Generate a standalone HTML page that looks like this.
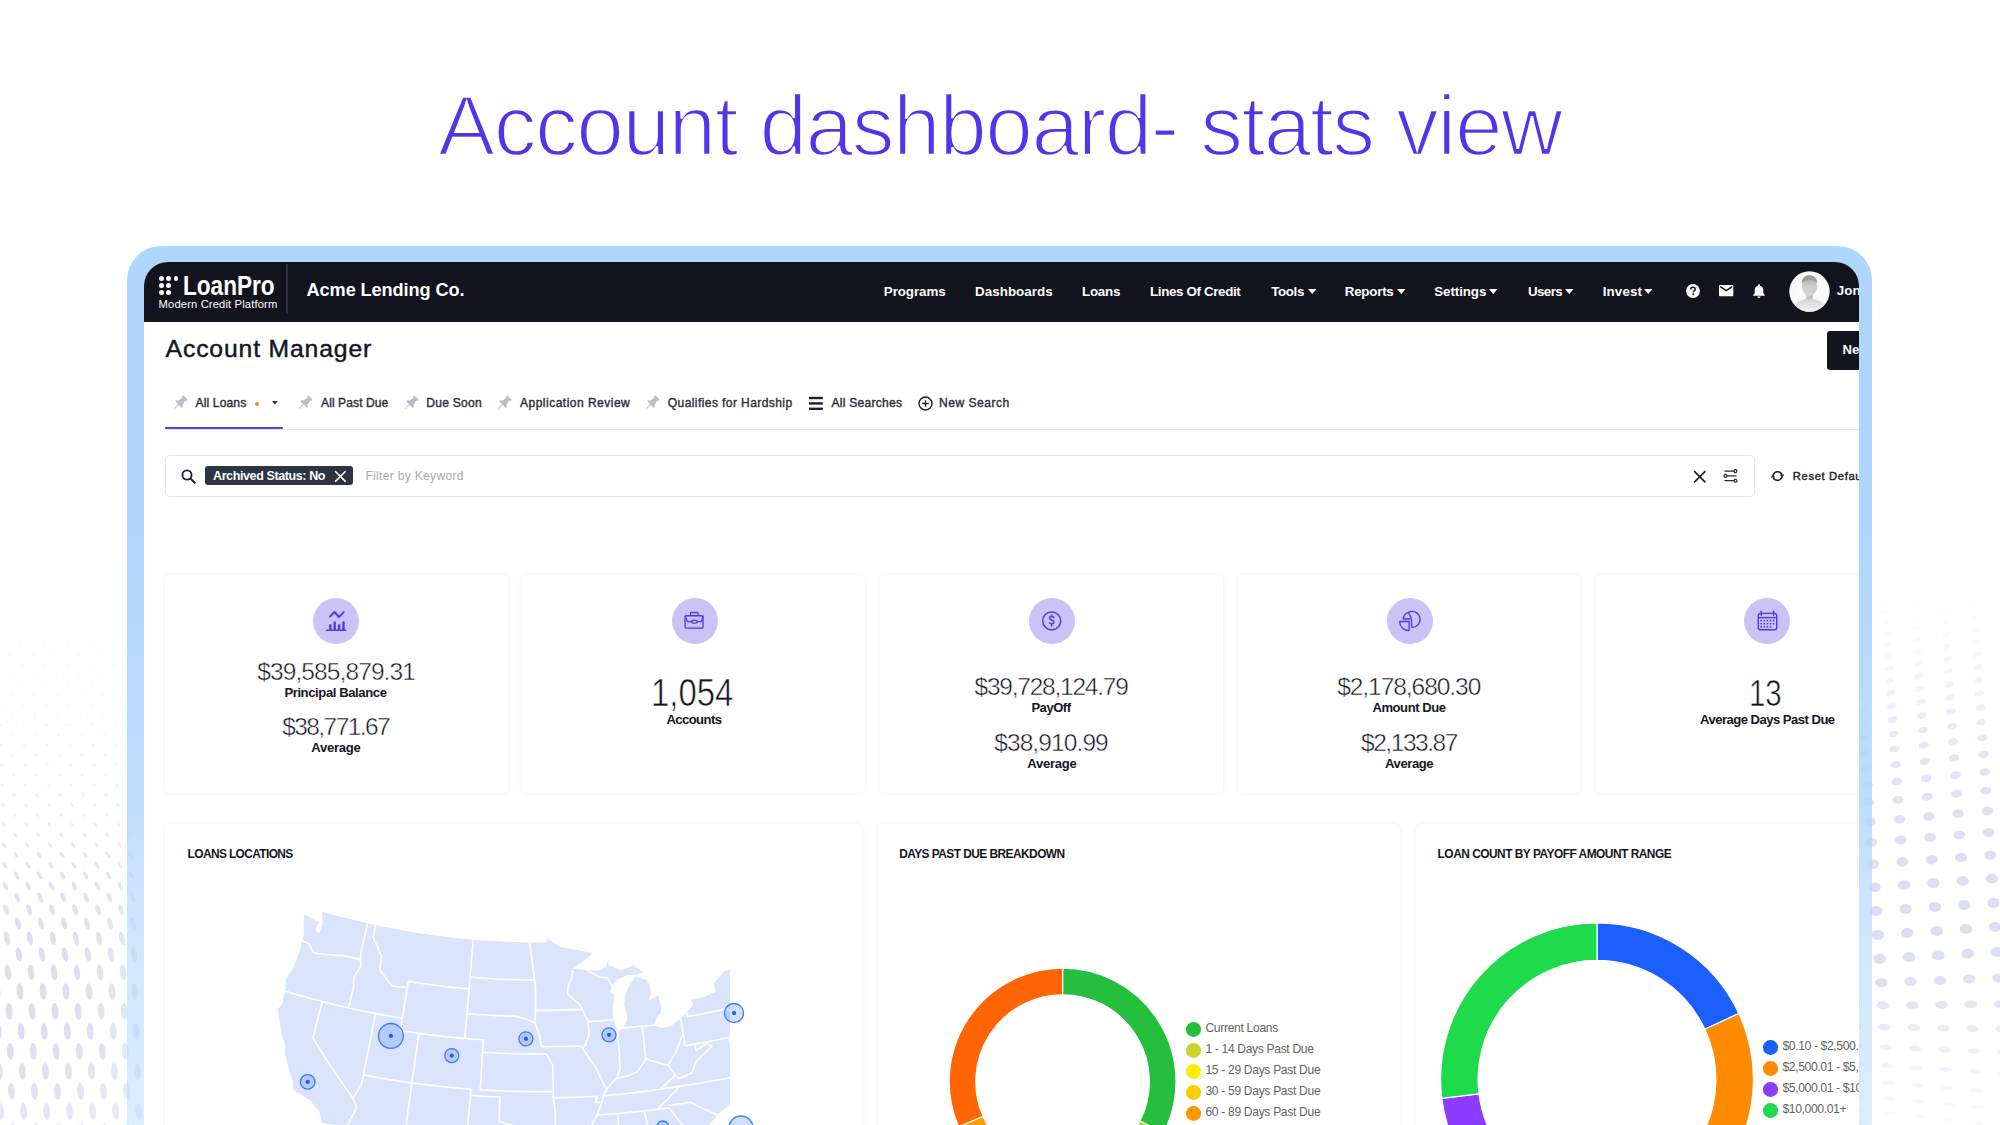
<!DOCTYPE html>
<html><head><meta charset="utf-8"><title>Account dashboard- stats view</title>
<style>
*{margin:0;padding:0;box-sizing:border-box}
html,body{width:2000px;height:1125px;overflow:hidden;background:#fff;font-family:"Liberation Sans",sans-serif}
.a{position:absolute;white-space:nowrap}
.card{position:absolute;background:#fff;border-radius:5px;box-shadow:0 0 6px rgba(30,30,60,.055),0 0 2px rgba(30,30,60,.04)}
.ic{position:absolute;width:46px;height:46px;border-radius:50%;background:#cbc2f6}
.dot{position:absolute;width:14px;height:14px;border-radius:50%}
.lg{position:absolute;font-size:12px;line-height:14px;color:#666;white-space:nowrap}
</style></head><body>

<svg class="a" style="left:0;top:0" width="2000" height="1125"><ellipse cx="-1.9" cy="645.0" rx="1.0" ry="1.8" transform="rotate(-42 -1.9 645.0)" fill="#d4d7ee" fill-opacity="0.18"/><ellipse cx="21.1" cy="645.0" rx="1.0" ry="1.8" transform="rotate(-42 21.1 645.0)" fill="#d4d7ee" fill-opacity="0.18"/><ellipse cx="44.1" cy="645.0" rx="1.0" ry="1.8" transform="rotate(-42 44.1 645.0)" fill="#d4d7ee" fill-opacity="0.18"/><ellipse cx="67.2" cy="645.0" rx="1.0" ry="1.8" transform="rotate(-42 67.2 645.0)" fill="#d4d7ee" fill-opacity="0.18"/><ellipse cx="90.2" cy="645.0" rx="1.0" ry="1.8" transform="rotate(-42 90.2 645.0)" fill="#d4d7ee" fill-opacity="0.16"/><ellipse cx="113.2" cy="645.0" rx="1.0" ry="1.8" transform="rotate(-42 113.2 645.0)" fill="#d4d7ee" fill-opacity="0.14"/><ellipse cx="136.2" cy="645.0" rx="1.0" ry="1.8" transform="rotate(-42 136.2 645.0)" fill="#d4d7ee" fill-opacity="0.13"/><ellipse cx="9.9" cy="655.0" rx="1.0" ry="1.8" transform="rotate(-42 9.9 655.0)" fill="#d4d7ee" fill-opacity="0.18"/><ellipse cx="33.0" cy="655.0" rx="1.0" ry="1.8" transform="rotate(-42 33.0 655.0)" fill="#d4d7ee" fill-opacity="0.18"/><ellipse cx="56.0" cy="655.0" rx="1.0" ry="1.8" transform="rotate(-42 56.0 655.0)" fill="#d4d7ee" fill-opacity="0.18"/><ellipse cx="79.0" cy="655.0" rx="1.0" ry="1.8" transform="rotate(-42 79.0 655.0)" fill="#d4d7ee" fill-opacity="0.17"/><ellipse cx="102.0" cy="655.0" rx="1.0" ry="1.8" transform="rotate(-42 102.0 655.0)" fill="#d4d7ee" fill-opacity="0.15"/><ellipse cx="125.0" cy="655.0" rx="1.0" ry="1.8" transform="rotate(-42 125.0 655.0)" fill="#d4d7ee" fill-opacity="0.14"/><ellipse cx="-1.2" cy="665.0" rx="1.0" ry="1.8" transform="rotate(-42 -1.2 665.0)" fill="#d4d7ee" fill-opacity="0.18"/><ellipse cx="21.8" cy="665.0" rx="1.0" ry="1.8" transform="rotate(-42 21.8 665.0)" fill="#d4d7ee" fill-opacity="0.18"/><ellipse cx="44.8" cy="665.0" rx="1.0" ry="1.8" transform="rotate(-42 44.8 665.0)" fill="#d4d7ee" fill-opacity="0.18"/><ellipse cx="67.8" cy="665.0" rx="1.0" ry="1.8" transform="rotate(-42 67.8 665.0)" fill="#d4d7ee" fill-opacity="0.18"/><ellipse cx="90.8" cy="665.0" rx="1.0" ry="1.8" transform="rotate(-42 90.8 665.0)" fill="#d4d7ee" fill-opacity="0.16"/><ellipse cx="113.8" cy="665.0" rx="1.0" ry="1.8" transform="rotate(-42 113.8 665.0)" fill="#d4d7ee" fill-opacity="0.14"/><ellipse cx="136.8" cy="665.0" rx="1.0" ry="1.8" transform="rotate(-42 136.8 665.0)" fill="#d4d7ee" fill-opacity="0.13"/><ellipse cx="10.6" cy="675.0" rx="1.0" ry="1.8" transform="rotate(-42 10.6 675.0)" fill="#d4d7ee" fill-opacity="0.18"/><ellipse cx="33.5" cy="675.0" rx="1.0" ry="1.8" transform="rotate(-42 33.5 675.0)" fill="#d4d7ee" fill-opacity="0.18"/><ellipse cx="56.5" cy="675.0" rx="1.0" ry="1.8" transform="rotate(-42 56.5 675.0)" fill="#d4d7ee" fill-opacity="0.18"/><ellipse cx="79.5" cy="675.0" rx="1.0" ry="1.8" transform="rotate(-42 79.5 675.0)" fill="#d4d7ee" fill-opacity="0.17"/><ellipse cx="102.5" cy="675.0" rx="1.0" ry="1.8" transform="rotate(-42 102.5 675.0)" fill="#d4d7ee" fill-opacity="0.16"/><ellipse cx="125.5" cy="675.0" rx="1.0" ry="1.8" transform="rotate(-42 125.5 675.0)" fill="#d4d7ee" fill-opacity="0.14"/><ellipse cx="-0.7" cy="685.0" rx="1.0" ry="1.8" transform="rotate(-42 -0.7 685.0)" fill="#d4d7ee" fill-opacity="0.19"/><ellipse cx="22.4" cy="685.0" rx="1.0" ry="1.8" transform="rotate(-42 22.4 685.0)" fill="#d4d7ee" fill-opacity="0.19"/><ellipse cx="45.4" cy="685.0" rx="1.0" ry="1.8" transform="rotate(-42 45.4 685.0)" fill="#d4d7ee" fill-opacity="0.19"/><ellipse cx="68.3" cy="685.0" rx="1.0" ry="1.8" transform="rotate(-42 68.3 685.0)" fill="#d4d7ee" fill-opacity="0.19"/><ellipse cx="91.3" cy="685.0" rx="1.0" ry="1.8" transform="rotate(-42 91.3 685.0)" fill="#d4d7ee" fill-opacity="0.17"/><ellipse cx="114.3" cy="685.0" rx="1.0" ry="1.8" transform="rotate(-42 114.3 685.0)" fill="#d4d7ee" fill-opacity="0.15"/><ellipse cx="137.3" cy="685.0" rx="1.0" ry="1.8" transform="rotate(-42 137.3 685.0)" fill="#d4d7ee" fill-opacity="0.14"/><ellipse cx="11.2" cy="695.0" rx="1.0" ry="1.8" transform="rotate(-42 11.2 695.0)" fill="#d4d7ee" fill-opacity="0.20"/><ellipse cx="34.1" cy="695.0" rx="1.0" ry="1.8" transform="rotate(-42 34.1 695.0)" fill="#d4d7ee" fill-opacity="0.20"/><ellipse cx="57.1" cy="695.0" rx="1.0" ry="1.8" transform="rotate(-42 57.1 695.0)" fill="#d4d7ee" fill-opacity="0.20"/><ellipse cx="80.2" cy="695.0" rx="1.0" ry="1.8" transform="rotate(-42 80.2 695.0)" fill="#d4d7ee" fill-opacity="0.19"/><ellipse cx="103.2" cy="695.0" rx="1.0" ry="1.8" transform="rotate(-42 103.2 695.0)" fill="#d4d7ee" fill-opacity="0.17"/><ellipse cx="126.2" cy="695.0" rx="1.0" ry="1.8" transform="rotate(-42 126.2 695.0)" fill="#d4d7ee" fill-opacity="0.15"/><ellipse cx="-0.1" cy="705.0" rx="1.0" ry="1.8" transform="rotate(-42 -0.1 705.0)" fill="#d4d7ee" fill-opacity="0.21"/><ellipse cx="22.9" cy="705.0" rx="1.0" ry="1.8" transform="rotate(-42 22.9 705.0)" fill="#d4d7ee" fill-opacity="0.21"/><ellipse cx="46.0" cy="705.0" rx="1.0" ry="1.8" transform="rotate(-42 46.0 705.0)" fill="#d4d7ee" fill-opacity="0.21"/><ellipse cx="69.0" cy="705.0" rx="1.0" ry="1.8" transform="rotate(-42 69.0 705.0)" fill="#d4d7ee" fill-opacity="0.21"/><ellipse cx="92.0" cy="705.0" rx="1.0" ry="1.8" transform="rotate(-42 92.0 705.0)" fill="#d4d7ee" fill-opacity="0.20"/><ellipse cx="115.0" cy="705.0" rx="1.0" ry="1.8" transform="rotate(-42 115.0 705.0)" fill="#d4d7ee" fill-opacity="0.17"/><ellipse cx="137.9" cy="705.0" rx="1.0" ry="1.8" transform="rotate(-42 137.9 705.0)" fill="#d4d7ee" fill-opacity="0.16"/><ellipse cx="11.8" cy="715.0" rx="1.0" ry="1.8" transform="rotate(-42 11.8 715.0)" fill="#d4d7ee" fill-opacity="0.23"/><ellipse cx="34.8" cy="715.0" rx="1.0" ry="1.8" transform="rotate(-42 34.8 715.0)" fill="#d4d7ee" fill-opacity="0.23"/><ellipse cx="57.8" cy="715.0" rx="1.0" ry="1.8" transform="rotate(-42 57.8 715.0)" fill="#d4d7ee" fill-opacity="0.23"/><ellipse cx="80.8" cy="715.0" rx="1.0" ry="1.8" transform="rotate(-42 80.8 715.0)" fill="#d4d7ee" fill-opacity="0.22"/><ellipse cx="103.8" cy="715.0" rx="1.0" ry="1.8" transform="rotate(-42 103.8 715.0)" fill="#d4d7ee" fill-opacity="0.20"/><ellipse cx="126.8" cy="715.0" rx="1.0" ry="1.8" transform="rotate(-42 126.8 715.0)" fill="#d4d7ee" fill-opacity="0.18"/><ellipse cx="0.5" cy="725.0" rx="1.0" ry="1.8" transform="rotate(-42 0.5 725.0)" fill="#d4d7ee" fill-opacity="0.25"/><ellipse cx="23.6" cy="725.0" rx="1.0" ry="1.8" transform="rotate(-42 23.6 725.0)" fill="#d4d7ee" fill-opacity="0.25"/><ellipse cx="46.5" cy="725.0" rx="1.0" ry="1.8" transform="rotate(-42 46.5 725.0)" fill="#d4d7ee" fill-opacity="0.25"/><ellipse cx="69.5" cy="725.0" rx="1.0" ry="1.8" transform="rotate(-42 69.5 725.0)" fill="#d4d7ee" fill-opacity="0.25"/><ellipse cx="92.5" cy="725.0" rx="1.0" ry="1.8" transform="rotate(-42 92.5 725.0)" fill="#d4d7ee" fill-opacity="0.23"/><ellipse cx="115.5" cy="725.0" rx="1.0" ry="1.8" transform="rotate(-42 115.5 725.0)" fill="#d4d7ee" fill-opacity="0.20"/><ellipse cx="138.6" cy="725.0" rx="1.0" ry="1.8" transform="rotate(-42 138.6 725.0)" fill="#d4d7ee" fill-opacity="0.19"/><ellipse cx="12.3" cy="735.0" rx="1.0" ry="1.8" transform="rotate(-42 12.3 735.0)" fill="#d4d7ee" fill-opacity="0.27"/><ellipse cx="35.4" cy="735.0" rx="1.0" ry="1.8" transform="rotate(-42 35.4 735.0)" fill="#d4d7ee" fill-opacity="0.27"/><ellipse cx="58.4" cy="735.0" rx="1.0" ry="1.8" transform="rotate(-42 58.4 735.0)" fill="#d4d7ee" fill-opacity="0.27"/><ellipse cx="81.3" cy="735.0" rx="1.0" ry="1.8" transform="rotate(-42 81.3 735.0)" fill="#d4d7ee" fill-opacity="0.26"/><ellipse cx="104.3" cy="735.0" rx="1.0" ry="1.8" transform="rotate(-42 104.3 735.0)" fill="#d4d7ee" fill-opacity="0.23"/><ellipse cx="127.3" cy="735.0" rx="1.0" ry="1.8" transform="rotate(-42 127.3 735.0)" fill="#d4d7ee" fill-opacity="0.21"/><ellipse cx="1.1" cy="745.0" rx="1.0" ry="1.8" transform="rotate(-42 1.1 745.0)" fill="#d4d7ee" fill-opacity="0.30"/><ellipse cx="24.1" cy="745.0" rx="1.0" ry="1.8" transform="rotate(-42 24.1 745.0)" fill="#d4d7ee" fill-opacity="0.30"/><ellipse cx="47.1" cy="745.0" rx="1.0" ry="1.8" transform="rotate(-42 47.1 745.0)" fill="#d4d7ee" fill-opacity="0.30"/><ellipse cx="70.2" cy="745.0" rx="1.0" ry="1.8" transform="rotate(-42 70.2 745.0)" fill="#d4d7ee" fill-opacity="0.29"/><ellipse cx="93.2" cy="745.0" rx="1.0" ry="1.8" transform="rotate(-42 93.2 745.0)" fill="#d4d7ee" fill-opacity="0.27"/><ellipse cx="116.2" cy="745.0" rx="1.0" ry="1.8" transform="rotate(-42 116.2 745.0)" fill="#d4d7ee" fill-opacity="0.24"/><ellipse cx="139.2" cy="745.0" rx="1.0" ry="1.8" transform="rotate(-42 139.2 745.0)" fill="#d4d7ee" fill-opacity="0.22"/><ellipse cx="12.9" cy="755.0" rx="1.0" ry="1.8" transform="rotate(-42 12.9 755.0)" fill="#d4d7ee" fill-opacity="0.32"/><ellipse cx="36.0" cy="755.0" rx="1.0" ry="1.8" transform="rotate(-42 36.0 755.0)" fill="#d4d7ee" fill-opacity="0.32"/><ellipse cx="59.0" cy="755.0" rx="1.0" ry="1.8" transform="rotate(-42 59.0 755.0)" fill="#d4d7ee" fill-opacity="0.32"/><ellipse cx="82.0" cy="755.0" rx="1.0" ry="1.8" transform="rotate(-42 82.0 755.0)" fill="#d4d7ee" fill-opacity="0.31"/><ellipse cx="105.0" cy="755.0" rx="1.0" ry="1.8" transform="rotate(-42 105.0 755.0)" fill="#d4d7ee" fill-opacity="0.28"/><ellipse cx="128.0" cy="755.0" rx="1.0" ry="1.8" transform="rotate(-42 128.0 755.0)" fill="#d4d7ee" fill-opacity="0.25"/><ellipse cx="1.8" cy="765.0" rx="1.0" ry="1.8" transform="rotate(-42 1.8 765.0)" fill="#d4d7ee" fill-opacity="0.35"/><ellipse cx="24.8" cy="765.0" rx="1.0" ry="1.8" transform="rotate(-42 24.8 765.0)" fill="#d4d7ee" fill-opacity="0.35"/><ellipse cx="47.8" cy="765.0" rx="1.0" ry="1.8" transform="rotate(-42 47.8 765.0)" fill="#d4d7ee" fill-opacity="0.35"/><ellipse cx="70.8" cy="765.0" rx="1.0" ry="1.8" transform="rotate(-42 70.8 765.0)" fill="#d4d7ee" fill-opacity="0.35"/><ellipse cx="93.8" cy="765.0" rx="1.0" ry="1.8" transform="rotate(-42 93.8 765.0)" fill="#d4d7ee" fill-opacity="0.32"/><ellipse cx="116.8" cy="765.0" rx="1.0" ry="1.8" transform="rotate(-42 116.8 765.0)" fill="#d4d7ee" fill-opacity="0.28"/><ellipse cx="139.8" cy="765.0" rx="1.0" ry="1.8" transform="rotate(-42 139.8 765.0)" fill="#d4d7ee" fill-opacity="0.26"/><ellipse cx="-9.4" cy="775.0" rx="1.0" ry="1.8" transform="rotate(-42 -9.4 775.0)" fill="#d4d7ee" fill-opacity="0.38"/><ellipse cx="13.6" cy="775.0" rx="1.0" ry="1.8" transform="rotate(-42 13.6 775.0)" fill="#d4d7ee" fill-opacity="0.38"/><ellipse cx="36.5" cy="775.0" rx="1.0" ry="1.8" transform="rotate(-42 36.5 775.0)" fill="#d4d7ee" fill-opacity="0.38"/><ellipse cx="59.5" cy="775.0" rx="1.0" ry="1.8" transform="rotate(-42 59.5 775.0)" fill="#d4d7ee" fill-opacity="0.38"/><ellipse cx="82.5" cy="775.0" rx="1.0" ry="1.8" transform="rotate(-42 82.5 775.0)" fill="#d4d7ee" fill-opacity="0.36"/><ellipse cx="105.5" cy="775.0" rx="1.0" ry="1.8" transform="rotate(-42 105.5 775.0)" fill="#d4d7ee" fill-opacity="0.32"/><ellipse cx="128.6" cy="775.0" rx="1.0" ry="1.8" transform="rotate(-42 128.6 775.0)" fill="#d4d7ee" fill-opacity="0.29"/><ellipse cx="2.3" cy="785.0" rx="1.0" ry="1.8" transform="rotate(-42 2.3 785.0)" fill="#d4d7ee" fill-opacity="0.41"/><ellipse cx="25.4" cy="785.0" rx="1.0" ry="1.8" transform="rotate(-42 25.4 785.0)" fill="#d4d7ee" fill-opacity="0.41"/><ellipse cx="48.4" cy="785.0" rx="1.0" ry="1.8" transform="rotate(-42 48.4 785.0)" fill="#d4d7ee" fill-opacity="0.41"/><ellipse cx="71.3" cy="785.0" rx="1.0" ry="1.8" transform="rotate(-42 71.3 785.0)" fill="#d4d7ee" fill-opacity="0.41"/><ellipse cx="94.3" cy="785.0" rx="1.0" ry="1.8" transform="rotate(-42 94.3 785.0)" fill="#d4d7ee" fill-opacity="0.37"/><ellipse cx="117.3" cy="785.0" rx="1.0" ry="1.8" transform="rotate(-42 117.3 785.0)" fill="#d4d7ee" fill-opacity="0.33"/><ellipse cx="-8.9" cy="795.0" rx="1.0" ry="1.9" transform="rotate(-42 -8.9 795.0)" fill="#d4d7ee" fill-opacity="0.44"/><ellipse cx="14.1" cy="795.0" rx="1.0" ry="1.9" transform="rotate(-42 14.1 795.0)" fill="#d4d7ee" fill-opacity="0.44"/><ellipse cx="37.1" cy="795.0" rx="1.0" ry="1.9" transform="rotate(-42 37.1 795.0)" fill="#d4d7ee" fill-opacity="0.44"/><ellipse cx="60.1" cy="795.0" rx="1.0" ry="1.9" transform="rotate(-42 60.1 795.0)" fill="#d4d7ee" fill-opacity="0.44"/><ellipse cx="83.2" cy="795.0" rx="1.0" ry="1.9" transform="rotate(-42 83.2 795.0)" fill="#d4d7ee" fill-opacity="0.42"/><ellipse cx="106.2" cy="795.0" rx="1.0" ry="1.9" transform="rotate(-42 106.2 795.0)" fill="#d4d7ee" fill-opacity="0.37"/><ellipse cx="129.2" cy="795.0" rx="1.0" ry="1.9" transform="rotate(-42 129.2 795.0)" fill="#d4d7ee" fill-opacity="0.34"/><ellipse cx="3.0" cy="805.0" rx="1.1" ry="2.0" transform="rotate(-41 3.0 805.0)" fill="#d4d7ee" fill-opacity="0.47"/><ellipse cx="25.9" cy="805.0" rx="1.1" ry="2.0" transform="rotate(-41 25.9 805.0)" fill="#d4d7ee" fill-opacity="0.47"/><ellipse cx="49.0" cy="805.0" rx="1.1" ry="2.0" transform="rotate(-41 49.0 805.0)" fill="#d4d7ee" fill-opacity="0.47"/><ellipse cx="72.0" cy="805.0" rx="1.1" ry="2.0" transform="rotate(-41 72.0 805.0)" fill="#d4d7ee" fill-opacity="0.47"/><ellipse cx="95.0" cy="805.0" rx="1.1" ry="2.0" transform="rotate(-41 95.0 805.0)" fill="#d4d7ee" fill-opacity="0.42"/><ellipse cx="118.0" cy="805.0" rx="1.1" ry="2.0" transform="rotate(-41 118.0 805.0)" fill="#d4d7ee" fill-opacity="0.38"/><ellipse cx="-8.2" cy="815.0" rx="1.1" ry="2.2" transform="rotate(-40 -8.2 815.0)" fill="#d4d7ee" fill-opacity="0.50"/><ellipse cx="14.8" cy="815.0" rx="1.1" ry="2.2" transform="rotate(-40 14.8 815.0)" fill="#d4d7ee" fill-opacity="0.50"/><ellipse cx="37.8" cy="815.0" rx="1.1" ry="2.2" transform="rotate(-40 37.8 815.0)" fill="#d4d7ee" fill-opacity="0.50"/><ellipse cx="60.8" cy="815.0" rx="1.1" ry="2.2" transform="rotate(-40 60.8 815.0)" fill="#d4d7ee" fill-opacity="0.50"/><ellipse cx="83.8" cy="815.0" rx="1.1" ry="2.2" transform="rotate(-40 83.8 815.0)" fill="#d4d7ee" fill-opacity="0.48"/><ellipse cx="106.8" cy="815.0" rx="1.1" ry="2.2" transform="rotate(-40 106.8 815.0)" fill="#d4d7ee" fill-opacity="0.42"/><ellipse cx="129.8" cy="815.0" rx="1.1" ry="2.2" transform="rotate(-40 129.8 815.0)" fill="#d4d7ee" fill-opacity="0.38"/><ellipse cx="3.5" cy="825.0" rx="1.2" ry="2.5" transform="rotate(-38 3.5 825.0)" fill="#d4d7ee" fill-opacity="0.53"/><ellipse cx="26.6" cy="825.0" rx="1.2" ry="2.5" transform="rotate(-38 26.6 825.0)" fill="#d4d7ee" fill-opacity="0.53"/><ellipse cx="49.5" cy="825.0" rx="1.2" ry="2.5" transform="rotate(-38 49.5 825.0)" fill="#d4d7ee" fill-opacity="0.53"/><ellipse cx="72.5" cy="825.0" rx="1.2" ry="2.5" transform="rotate(-38 72.5 825.0)" fill="#d4d7ee" fill-opacity="0.53"/><ellipse cx="95.5" cy="825.0" rx="1.2" ry="2.5" transform="rotate(-38 95.5 825.0)" fill="#d4d7ee" fill-opacity="0.48"/><ellipse cx="118.5" cy="825.0" rx="1.2" ry="2.5" transform="rotate(-38 118.5 825.0)" fill="#d4d7ee" fill-opacity="0.42"/><ellipse cx="-7.7" cy="835.0" rx="1.3" ry="2.8" transform="rotate(-37 -7.7 835.0)" fill="#d4d7ee" fill-opacity="0.57"/><ellipse cx="15.3" cy="835.0" rx="1.3" ry="2.8" transform="rotate(-37 15.3 835.0)" fill="#d4d7ee" fill-opacity="0.57"/><ellipse cx="38.4" cy="835.0" rx="1.3" ry="2.8" transform="rotate(-37 38.4 835.0)" fill="#d4d7ee" fill-opacity="0.57"/><ellipse cx="61.4" cy="835.0" rx="1.3" ry="2.8" transform="rotate(-37 61.4 835.0)" fill="#d4d7ee" fill-opacity="0.57"/><ellipse cx="84.3" cy="835.0" rx="1.3" ry="2.8" transform="rotate(-37 84.3 835.0)" fill="#d4d7ee" fill-opacity="0.53"/><ellipse cx="107.3" cy="835.0" rx="1.3" ry="2.8" transform="rotate(-37 107.3 835.0)" fill="#d4d7ee" fill-opacity="0.48"/><ellipse cx="130.3" cy="835.0" rx="1.3" ry="2.8" transform="rotate(-37 130.3 835.0)" fill="#d4d7ee" fill-opacity="0.43"/><ellipse cx="4.1" cy="845.0" rx="1.5" ry="3.1" transform="rotate(-35 4.1 845.0)" fill="#d4d7ee" fill-opacity="0.60"/><ellipse cx="27.1" cy="845.0" rx="1.5" ry="3.1" transform="rotate(-35 27.1 845.0)" fill="#d4d7ee" fill-opacity="0.60"/><ellipse cx="50.1" cy="845.0" rx="1.5" ry="3.1" transform="rotate(-35 50.1 845.0)" fill="#d4d7ee" fill-opacity="0.60"/><ellipse cx="73.2" cy="845.0" rx="1.5" ry="3.1" transform="rotate(-35 73.2 845.0)" fill="#d4d7ee" fill-opacity="0.58"/><ellipse cx="96.2" cy="845.0" rx="1.5" ry="3.1" transform="rotate(-35 96.2 845.0)" fill="#d4d7ee" fill-opacity="0.53"/><ellipse cx="119.2" cy="845.0" rx="1.5" ry="3.1" transform="rotate(-35 119.2 845.0)" fill="#d4d7ee" fill-opacity="0.47"/><ellipse cx="-7.0" cy="855.0" rx="1.6" ry="3.4" transform="rotate(-33 -7.0 855.0)" fill="#d4d7ee" fill-opacity="0.62"/><ellipse cx="15.9" cy="855.0" rx="1.6" ry="3.4" transform="rotate(-33 15.9 855.0)" fill="#d4d7ee" fill-opacity="0.62"/><ellipse cx="39.0" cy="855.0" rx="1.6" ry="3.4" transform="rotate(-33 39.0 855.0)" fill="#d4d7ee" fill-opacity="0.62"/><ellipse cx="62.0" cy="855.0" rx="1.6" ry="3.4" transform="rotate(-33 62.0 855.0)" fill="#d4d7ee" fill-opacity="0.62"/><ellipse cx="85.0" cy="855.0" rx="1.6" ry="3.4" transform="rotate(-33 85.0 855.0)" fill="#d4d7ee" fill-opacity="0.59"/><ellipse cx="108.0" cy="855.0" rx="1.6" ry="3.4" transform="rotate(-33 108.0 855.0)" fill="#d4d7ee" fill-opacity="0.52"/><ellipse cx="130.9" cy="855.0" rx="1.6" ry="3.4" transform="rotate(-33 130.9 855.0)" fill="#d4d7ee" fill-opacity="0.47"/><ellipse cx="4.8" cy="865.0" rx="1.7" ry="3.8" transform="rotate(-30 4.8 865.0)" fill="#d4d7ee" fill-opacity="0.65"/><ellipse cx="27.8" cy="865.0" rx="1.7" ry="3.8" transform="rotate(-30 27.8 865.0)" fill="#d4d7ee" fill-opacity="0.65"/><ellipse cx="50.8" cy="865.0" rx="1.7" ry="3.8" transform="rotate(-30 50.8 865.0)" fill="#d4d7ee" fill-opacity="0.65"/><ellipse cx="73.8" cy="865.0" rx="1.7" ry="3.8" transform="rotate(-30 73.8 865.0)" fill="#d4d7ee" fill-opacity="0.64"/><ellipse cx="96.8" cy="865.0" rx="1.7" ry="3.8" transform="rotate(-30 96.8 865.0)" fill="#d4d7ee" fill-opacity="0.58"/><ellipse cx="119.8" cy="865.0" rx="1.7" ry="3.8" transform="rotate(-30 119.8 865.0)" fill="#d4d7ee" fill-opacity="0.52"/><ellipse cx="-6.4" cy="875.3" rx="1.9" ry="4.3" transform="rotate(-28 -6.4 875.3)" fill="#d4d7ee" fill-opacity="0.68"/><ellipse cx="16.6" cy="875.3" rx="1.9" ry="4.3" transform="rotate(-28 16.6 875.3)" fill="#d4d7ee" fill-opacity="0.68"/><ellipse cx="39.6" cy="875.3" rx="1.9" ry="4.3" transform="rotate(-28 39.6 875.3)" fill="#d4d7ee" fill-opacity="0.68"/><ellipse cx="62.6" cy="875.3" rx="1.9" ry="4.3" transform="rotate(-28 62.6 875.3)" fill="#d4d7ee" fill-opacity="0.68"/><ellipse cx="85.6" cy="875.3" rx="1.9" ry="4.3" transform="rotate(-28 85.6 875.3)" fill="#d4d7ee" fill-opacity="0.64"/><ellipse cx="108.6" cy="875.3" rx="1.9" ry="4.3" transform="rotate(-28 108.6 875.3)" fill="#d4d7ee" fill-opacity="0.57"/><ellipse cx="131.6" cy="875.3" rx="1.9" ry="4.3" transform="rotate(-28 131.6 875.3)" fill="#d4d7ee" fill-opacity="0.51"/><ellipse cx="5.4" cy="886.1" rx="2.1" ry="4.7" transform="rotate(-25 5.4 886.1)" fill="#d4d7ee" fill-opacity="0.70"/><ellipse cx="28.4" cy="886.1" rx="2.1" ry="4.7" transform="rotate(-25 28.4 886.1)" fill="#d4d7ee" fill-opacity="0.70"/><ellipse cx="51.4" cy="886.1" rx="2.1" ry="4.7" transform="rotate(-25 51.4 886.1)" fill="#d4d7ee" fill-opacity="0.70"/><ellipse cx="74.4" cy="886.1" rx="2.1" ry="4.7" transform="rotate(-25 74.4 886.1)" fill="#d4d7ee" fill-opacity="0.69"/><ellipse cx="97.4" cy="886.1" rx="2.1" ry="4.7" transform="rotate(-25 97.4 886.1)" fill="#d4d7ee" fill-opacity="0.63"/><ellipse cx="120.4" cy="886.1" rx="2.1" ry="4.7" transform="rotate(-25 120.4 886.1)" fill="#d4d7ee" fill-opacity="0.56"/><ellipse cx="-5.8" cy="897.5" rx="2.2" ry="5.2" transform="rotate(-22 -5.8 897.5)" fill="#d4d7ee" fill-opacity="0.73"/><ellipse cx="17.2" cy="897.5" rx="2.2" ry="5.2" transform="rotate(-22 17.2 897.5)" fill="#d4d7ee" fill-opacity="0.73"/><ellipse cx="40.2" cy="897.5" rx="2.2" ry="5.2" transform="rotate(-22 40.2 897.5)" fill="#d4d7ee" fill-opacity="0.73"/><ellipse cx="63.2" cy="897.5" rx="2.2" ry="5.2" transform="rotate(-22 63.2 897.5)" fill="#d4d7ee" fill-opacity="0.73"/><ellipse cx="86.2" cy="897.5" rx="2.2" ry="5.2" transform="rotate(-22 86.2 897.5)" fill="#d4d7ee" fill-opacity="0.68"/><ellipse cx="109.2" cy="897.5" rx="2.2" ry="5.2" transform="rotate(-22 109.2 897.5)" fill="#d4d7ee" fill-opacity="0.61"/><ellipse cx="132.2" cy="897.5" rx="2.2" ry="5.2" transform="rotate(-22 132.2 897.5)" fill="#d4d7ee" fill-opacity="0.55"/><ellipse cx="6.1" cy="909.9" rx="2.4" ry="5.7" transform="rotate(-19 6.1 909.9)" fill="#d4d7ee" fill-opacity="0.75"/><ellipse cx="29.1" cy="909.9" rx="2.4" ry="5.7" transform="rotate(-19 29.1 909.9)" fill="#d4d7ee" fill-opacity="0.75"/><ellipse cx="52.1" cy="909.9" rx="2.4" ry="5.7" transform="rotate(-19 52.1 909.9)" fill="#d4d7ee" fill-opacity="0.75"/><ellipse cx="75.1" cy="909.9" rx="2.4" ry="5.7" transform="rotate(-19 75.1 909.9)" fill="#d4d7ee" fill-opacity="0.74"/><ellipse cx="98.1" cy="909.9" rx="2.4" ry="5.7" transform="rotate(-19 98.1 909.9)" fill="#d4d7ee" fill-opacity="0.67"/><ellipse cx="121.1" cy="909.9" rx="2.4" ry="5.7" transform="rotate(-19 121.1 909.9)" fill="#d4d7ee" fill-opacity="0.59"/><ellipse cx="-5.0" cy="923.4" rx="2.6" ry="6.3" transform="rotate(-16 -5.0 923.4)" fill="#d4d7ee" fill-opacity="0.77"/><ellipse cx="18.0" cy="923.4" rx="2.6" ry="6.3" transform="rotate(-16 18.0 923.4)" fill="#d4d7ee" fill-opacity="0.77"/><ellipse cx="41.0" cy="923.4" rx="2.6" ry="6.3" transform="rotate(-16 41.0 923.4)" fill="#d4d7ee" fill-opacity="0.77"/><ellipse cx="64.0" cy="923.4" rx="2.6" ry="6.3" transform="rotate(-16 64.0 923.4)" fill="#d4d7ee" fill-opacity="0.77"/><ellipse cx="87.0" cy="923.4" rx="2.6" ry="6.3" transform="rotate(-16 87.0 923.4)" fill="#d4d7ee" fill-opacity="0.72"/><ellipse cx="110.0" cy="923.4" rx="2.6" ry="6.3" transform="rotate(-16 110.0 923.4)" fill="#d4d7ee" fill-opacity="0.64"/><ellipse cx="133.0" cy="923.4" rx="2.6" ry="6.3" transform="rotate(-16 133.0 923.4)" fill="#d4d7ee" fill-opacity="0.59"/><ellipse cx="6.9" cy="938.3" rx="2.8" ry="6.9" transform="rotate(-13 6.9 938.3)" fill="#d4d7ee" fill-opacity="0.79"/><ellipse cx="29.9" cy="938.3" rx="2.8" ry="6.9" transform="rotate(-13 29.9 938.3)" fill="#d4d7ee" fill-opacity="0.79"/><ellipse cx="52.9" cy="938.3" rx="2.8" ry="6.9" transform="rotate(-13 52.9 938.3)" fill="#d4d7ee" fill-opacity="0.79"/><ellipse cx="75.9" cy="938.3" rx="2.8" ry="6.9" transform="rotate(-13 75.9 938.3)" fill="#d4d7ee" fill-opacity="0.77"/><ellipse cx="98.9" cy="938.3" rx="2.8" ry="6.9" transform="rotate(-13 98.9 938.3)" fill="#d4d7ee" fill-opacity="0.70"/><ellipse cx="121.9" cy="938.3" rx="2.8" ry="6.9" transform="rotate(-13 121.9 938.3)" fill="#d4d7ee" fill-opacity="0.62"/><ellipse cx="-4.1" cy="954.6" rx="3.0" ry="7.4" transform="rotate(-10 -4.1 954.6)" fill="#d4d7ee" fill-opacity="0.80"/><ellipse cx="18.9" cy="954.6" rx="3.0" ry="7.4" transform="rotate(-10 18.9 954.6)" fill="#d4d7ee" fill-opacity="0.80"/><ellipse cx="41.9" cy="954.6" rx="3.0" ry="7.4" transform="rotate(-10 41.9 954.6)" fill="#d4d7ee" fill-opacity="0.80"/><ellipse cx="64.9" cy="954.6" rx="3.0" ry="7.4" transform="rotate(-10 64.9 954.6)" fill="#d4d7ee" fill-opacity="0.80"/><ellipse cx="87.9" cy="954.6" rx="3.0" ry="7.4" transform="rotate(-10 87.9 954.6)" fill="#d4d7ee" fill-opacity="0.74"/><ellipse cx="110.9" cy="954.6" rx="3.0" ry="7.4" transform="rotate(-10 110.9 954.6)" fill="#d4d7ee" fill-opacity="0.66"/><ellipse cx="133.9" cy="954.6" rx="3.0" ry="7.4" transform="rotate(-10 133.9 954.6)" fill="#d4d7ee" fill-opacity="0.60"/><ellipse cx="8.0" cy="972.4" rx="3.2" ry="7.9" transform="rotate(-7 8.0 972.4)" fill="#d4d7ee" fill-opacity="0.80"/><ellipse cx="31.0" cy="972.4" rx="3.2" ry="7.9" transform="rotate(-7 31.0 972.4)" fill="#d4d7ee" fill-opacity="0.80"/><ellipse cx="54.0" cy="972.4" rx="3.2" ry="7.9" transform="rotate(-7 54.0 972.4)" fill="#d4d7ee" fill-opacity="0.80"/><ellipse cx="77.0" cy="972.4" rx="3.2" ry="7.9" transform="rotate(-7 77.0 972.4)" fill="#d4d7ee" fill-opacity="0.78"/><ellipse cx="100.0" cy="972.4" rx="3.2" ry="7.9" transform="rotate(-7 100.0 972.4)" fill="#d4d7ee" fill-opacity="0.70"/><ellipse cx="123.0" cy="972.4" rx="3.2" ry="7.9" transform="rotate(-7 123.0 972.4)" fill="#d4d7ee" fill-opacity="0.62"/><ellipse cx="-3.0" cy="991.5" rx="3.4" ry="8.3" transform="rotate(-5 -3.0 991.5)" fill="#d4d7ee" fill-opacity="0.80"/><ellipse cx="20.0" cy="991.5" rx="3.4" ry="8.3" transform="rotate(-5 20.0 991.5)" fill="#d4d7ee" fill-opacity="0.80"/><ellipse cx="43.0" cy="991.5" rx="3.4" ry="8.3" transform="rotate(-5 43.0 991.5)" fill="#d4d7ee" fill-opacity="0.80"/><ellipse cx="66.0" cy="991.5" rx="3.4" ry="8.3" transform="rotate(-5 66.0 991.5)" fill="#d4d7ee" fill-opacity="0.80"/><ellipse cx="89.0" cy="991.5" rx="3.4" ry="8.3" transform="rotate(-5 89.0 991.5)" fill="#d4d7ee" fill-opacity="0.74"/><ellipse cx="112.0" cy="991.5" rx="3.4" ry="8.3" transform="rotate(-5 112.0 991.5)" fill="#d4d7ee" fill-opacity="0.66"/><ellipse cx="135.0" cy="991.5" rx="3.4" ry="8.3" transform="rotate(-5 135.0 991.5)" fill="#d4d7ee" fill-opacity="0.60"/><ellipse cx="9.1" cy="1011.4" rx="3.4" ry="8.4" transform="rotate(-4 9.1 1011.4)" fill="#d4d7ee" fill-opacity="0.80"/><ellipse cx="32.1" cy="1011.4" rx="3.4" ry="8.4" transform="rotate(-4 32.1 1011.4)" fill="#d4d7ee" fill-opacity="0.80"/><ellipse cx="55.1" cy="1011.4" rx="3.4" ry="8.4" transform="rotate(-4 55.1 1011.4)" fill="#d4d7ee" fill-opacity="0.80"/><ellipse cx="78.1" cy="1011.4" rx="3.4" ry="8.4" transform="rotate(-4 78.1 1011.4)" fill="#d4d7ee" fill-opacity="0.77"/><ellipse cx="101.1" cy="1011.4" rx="3.4" ry="8.4" transform="rotate(-4 101.1 1011.4)" fill="#d4d7ee" fill-opacity="0.70"/><ellipse cx="124.1" cy="1011.4" rx="3.4" ry="8.4" transform="rotate(-4 124.1 1011.4)" fill="#d4d7ee" fill-opacity="0.62"/><ellipse cx="-1.8" cy="1031.4" rx="3.4" ry="8.4" transform="rotate(-4 -1.8 1031.4)" fill="#d4d7ee" fill-opacity="0.80"/><ellipse cx="21.2" cy="1031.4" rx="3.4" ry="8.4" transform="rotate(-4 21.2 1031.4)" fill="#d4d7ee" fill-opacity="0.80"/><ellipse cx="44.2" cy="1031.4" rx="3.4" ry="8.4" transform="rotate(-4 44.2 1031.4)" fill="#d4d7ee" fill-opacity="0.80"/><ellipse cx="67.2" cy="1031.4" rx="3.4" ry="8.4" transform="rotate(-4 67.2 1031.4)" fill="#d4d7ee" fill-opacity="0.80"/><ellipse cx="90.2" cy="1031.4" rx="3.4" ry="8.4" transform="rotate(-4 90.2 1031.4)" fill="#d4d7ee" fill-opacity="0.74"/><ellipse cx="113.2" cy="1031.4" rx="3.4" ry="8.4" transform="rotate(-4 113.2 1031.4)" fill="#d4d7ee" fill-opacity="0.65"/><ellipse cx="136.2" cy="1031.4" rx="3.4" ry="8.4" transform="rotate(-4 136.2 1031.4)" fill="#d4d7ee" fill-opacity="0.60"/><ellipse cx="10.3" cy="1051.4" rx="3.4" ry="8.4" transform="rotate(-4 10.3 1051.4)" fill="#d4d7ee" fill-opacity="0.79"/><ellipse cx="33.3" cy="1051.4" rx="3.4" ry="8.4" transform="rotate(-4 33.3 1051.4)" fill="#d4d7ee" fill-opacity="0.79"/><ellipse cx="56.3" cy="1051.4" rx="3.4" ry="8.4" transform="rotate(-4 56.3 1051.4)" fill="#d4d7ee" fill-opacity="0.79"/><ellipse cx="79.3" cy="1051.4" rx="3.4" ry="8.4" transform="rotate(-4 79.3 1051.4)" fill="#d4d7ee" fill-opacity="0.76"/><ellipse cx="102.3" cy="1051.4" rx="3.4" ry="8.4" transform="rotate(-4 102.3 1051.4)" fill="#d4d7ee" fill-opacity="0.69"/><ellipse cx="125.3" cy="1051.4" rx="3.4" ry="8.4" transform="rotate(-4 125.3 1051.4)" fill="#d4d7ee" fill-opacity="0.61"/><ellipse cx="-0.6" cy="1071.4" rx="3.4" ry="8.4" transform="rotate(-4 -0.6 1071.4)" fill="#d4d7ee" fill-opacity="0.75"/><ellipse cx="22.4" cy="1071.4" rx="3.4" ry="8.4" transform="rotate(-4 22.4 1071.4)" fill="#d4d7ee" fill-opacity="0.75"/><ellipse cx="45.4" cy="1071.4" rx="3.4" ry="8.4" transform="rotate(-4 45.4 1071.4)" fill="#d4d7ee" fill-opacity="0.75"/><ellipse cx="68.4" cy="1071.4" rx="3.4" ry="8.4" transform="rotate(-4 68.4 1071.4)" fill="#d4d7ee" fill-opacity="0.75"/><ellipse cx="91.4" cy="1071.4" rx="3.4" ry="8.4" transform="rotate(-4 91.4 1071.4)" fill="#d4d7ee" fill-opacity="0.69"/><ellipse cx="114.4" cy="1071.4" rx="3.4" ry="8.4" transform="rotate(-4 114.4 1071.4)" fill="#d4d7ee" fill-opacity="0.61"/><ellipse cx="137.4" cy="1071.4" rx="3.4" ry="8.4" transform="rotate(-4 137.4 1071.4)" fill="#d4d7ee" fill-opacity="0.56"/><ellipse cx="11.5" cy="1091.4" rx="3.4" ry="8.4" transform="rotate(-4 11.5 1091.4)" fill="#d4d7ee" fill-opacity="0.69"/><ellipse cx="34.5" cy="1091.4" rx="3.4" ry="8.4" transform="rotate(-4 34.5 1091.4)" fill="#d4d7ee" fill-opacity="0.69"/><ellipse cx="57.5" cy="1091.4" rx="3.4" ry="8.4" transform="rotate(-4 57.5 1091.4)" fill="#d4d7ee" fill-opacity="0.69"/><ellipse cx="80.5" cy="1091.4" rx="3.4" ry="8.4" transform="rotate(-4 80.5 1091.4)" fill="#d4d7ee" fill-opacity="0.66"/><ellipse cx="103.5" cy="1091.4" rx="3.4" ry="8.4" transform="rotate(-4 103.5 1091.4)" fill="#d4d7ee" fill-opacity="0.59"/><ellipse cx="126.5" cy="1091.4" rx="3.4" ry="8.4" transform="rotate(-4 126.5 1091.4)" fill="#d4d7ee" fill-opacity="0.53"/><ellipse cx="0.6" cy="1111.4" rx="3.4" ry="8.4" transform="rotate(-4 0.6 1111.4)" fill="#d4d7ee" fill-opacity="0.62"/><ellipse cx="23.6" cy="1111.4" rx="3.4" ry="8.4" transform="rotate(-4 23.6 1111.4)" fill="#d4d7ee" fill-opacity="0.62"/><ellipse cx="46.6" cy="1111.4" rx="3.4" ry="8.4" transform="rotate(-4 46.6 1111.4)" fill="#d4d7ee" fill-opacity="0.62"/><ellipse cx="69.6" cy="1111.4" rx="3.4" ry="8.4" transform="rotate(-4 69.6 1111.4)" fill="#d4d7ee" fill-opacity="0.61"/><ellipse cx="92.6" cy="1111.4" rx="3.4" ry="8.4" transform="rotate(-4 92.6 1111.4)" fill="#d4d7ee" fill-opacity="0.56"/><ellipse cx="115.6" cy="1111.4" rx="3.4" ry="8.4" transform="rotate(-4 115.6 1111.4)" fill="#d4d7ee" fill-opacity="0.50"/><ellipse cx="138.6" cy="1111.4" rx="3.4" ry="8.4" transform="rotate(-4 138.6 1111.4)" fill="#d4d7ee" fill-opacity="0.47"/><ellipse cx="12.7" cy="1131.4" rx="3.4" ry="8.4" transform="rotate(-4 12.7 1131.4)" fill="#d4d7ee" fill-opacity="0.56"/><ellipse cx="35.7" cy="1131.4" rx="3.4" ry="8.4" transform="rotate(-4 35.7 1131.4)" fill="#d4d7ee" fill-opacity="0.56"/><ellipse cx="58.7" cy="1131.4" rx="3.4" ry="8.4" transform="rotate(-4 58.7 1131.4)" fill="#d4d7ee" fill-opacity="0.56"/><ellipse cx="81.7" cy="1131.4" rx="3.4" ry="8.4" transform="rotate(-4 81.7 1131.4)" fill="#d4d7ee" fill-opacity="0.53"/><ellipse cx="104.7" cy="1131.4" rx="3.4" ry="8.4" transform="rotate(-4 104.7 1131.4)" fill="#d4d7ee" fill-opacity="0.48"/><ellipse cx="127.7" cy="1131.4" rx="3.4" ry="8.4" transform="rotate(-4 127.7 1131.4)" fill="#d4d7ee" fill-opacity="0.43"/><ellipse cx="1854.9" cy="605.4" rx="4.1" ry="1.8" transform="rotate(-23 1854.9 605.4)" fill="#d8daf0" fill-opacity="0.05"/><ellipse cx="1884.2" cy="600.1" rx="4.1" ry="1.8" transform="rotate(-23 1884.2 600.1)" fill="#d8daf0" fill-opacity="0.05"/><ellipse cx="1855.7" cy="616.3" rx="4.1" ry="1.9" transform="rotate(-22 1855.7 616.3)" fill="#d8daf0" fill-opacity="0.08"/><ellipse cx="1885.0" cy="611.1" rx="4.1" ry="1.9" transform="rotate(-22 1885.0 611.1)" fill="#d8daf0" fill-opacity="0.07"/><ellipse cx="1914.3" cy="605.9" rx="4.1" ry="1.9" transform="rotate(-22 1914.3 605.9)" fill="#d8daf0" fill-opacity="0.06"/><ellipse cx="1943.6" cy="600.7" rx="4.1" ry="1.9" transform="rotate(-22 1943.6 600.7)" fill="#d8daf0" fill-opacity="0.05"/><ellipse cx="1972.9" cy="595.5" rx="4.1" ry="1.9" transform="rotate(-22 1972.9 595.5)" fill="#d8daf0" fill-opacity="0.04"/><ellipse cx="1856.5" cy="627.3" rx="4.2" ry="2.0" transform="rotate(-22 1856.5 627.3)" fill="#d8daf0" fill-opacity="0.11"/><ellipse cx="1885.8" cy="622.2" rx="4.2" ry="2.0" transform="rotate(-22 1885.8 622.2)" fill="#d8daf0" fill-opacity="0.10"/><ellipse cx="1915.1" cy="617.1" rx="4.2" ry="2.0" transform="rotate(-22 1915.1 617.1)" fill="#d8daf0" fill-opacity="0.08"/><ellipse cx="1944.4" cy="611.9" rx="4.2" ry="2.0" transform="rotate(-22 1944.4 611.9)" fill="#d8daf0" fill-opacity="0.07"/><ellipse cx="1973.7" cy="606.8" rx="4.2" ry="2.0" transform="rotate(-22 1973.7 606.8)" fill="#d8daf0" fill-opacity="0.06"/><ellipse cx="2003.0" cy="601.7" rx="4.2" ry="2.0" transform="rotate(-22 2003.0 601.7)" fill="#d8daf0" fill-opacity="0.06"/><ellipse cx="1857.2" cy="638.5" rx="4.2" ry="2.1" transform="rotate(-21 1857.2 638.5)" fill="#d8daf0" fill-opacity="0.14"/><ellipse cx="1886.5" cy="633.4" rx="4.2" ry="2.1" transform="rotate(-21 1886.5 633.4)" fill="#d8daf0" fill-opacity="0.13"/><ellipse cx="1915.8" cy="628.4" rx="4.2" ry="2.1" transform="rotate(-21 1915.8 628.4)" fill="#d8daf0" fill-opacity="0.12"/><ellipse cx="1945.1" cy="623.4" rx="4.2" ry="2.1" transform="rotate(-21 1945.1 623.4)" fill="#d8daf0" fill-opacity="0.10"/><ellipse cx="1974.4" cy="618.4" rx="4.2" ry="2.1" transform="rotate(-21 1974.4 618.4)" fill="#d8daf0" fill-opacity="0.09"/><ellipse cx="2003.7" cy="613.4" rx="4.2" ry="2.1" transform="rotate(-21 2003.7 613.4)" fill="#d8daf0" fill-opacity="0.08"/><ellipse cx="1858.0" cy="649.8" rx="4.3" ry="2.2" transform="rotate(-20 1858.0 649.8)" fill="#d8daf0" fill-opacity="0.18"/><ellipse cx="1887.3" cy="644.9" rx="4.3" ry="2.2" transform="rotate(-20 1887.3 644.9)" fill="#d8daf0" fill-opacity="0.17"/><ellipse cx="1916.6" cy="639.9" rx="4.3" ry="2.2" transform="rotate(-20 1916.6 639.9)" fill="#d8daf0" fill-opacity="0.15"/><ellipse cx="1945.9" cy="635.0" rx="4.3" ry="2.2" transform="rotate(-20 1945.9 635.0)" fill="#d8daf0" fill-opacity="0.14"/><ellipse cx="1975.2" cy="630.1" rx="4.3" ry="2.2" transform="rotate(-20 1975.2 630.1)" fill="#d8daf0" fill-opacity="0.13"/><ellipse cx="2004.5" cy="625.2" rx="4.3" ry="2.2" transform="rotate(-20 2004.5 625.2)" fill="#d8daf0" fill-opacity="0.12"/><ellipse cx="1858.8" cy="661.3" rx="4.4" ry="2.3" transform="rotate(-20 1858.8 661.3)" fill="#d8daf0" fill-opacity="0.22"/><ellipse cx="1888.1" cy="656.5" rx="4.4" ry="2.3" transform="rotate(-20 1888.1 656.5)" fill="#d8daf0" fill-opacity="0.21"/><ellipse cx="1917.4" cy="651.7" rx="4.4" ry="2.3" transform="rotate(-20 1917.4 651.7)" fill="#d8daf0" fill-opacity="0.20"/><ellipse cx="1946.7" cy="646.9" rx="4.4" ry="2.3" transform="rotate(-20 1946.7 646.9)" fill="#d8daf0" fill-opacity="0.18"/><ellipse cx="1976.0" cy="642.1" rx="4.4" ry="2.3" transform="rotate(-20 1976.0 642.1)" fill="#d8daf0" fill-opacity="0.17"/><ellipse cx="2005.3" cy="637.3" rx="4.4" ry="2.3" transform="rotate(-20 2005.3 637.3)" fill="#d8daf0" fill-opacity="0.16"/><ellipse cx="1859.7" cy="673.0" rx="4.5" ry="2.4" transform="rotate(-19 1859.7 673.0)" fill="#d8daf0" fill-opacity="0.27"/><ellipse cx="1889.0" cy="668.4" rx="4.5" ry="2.4" transform="rotate(-19 1889.0 668.4)" fill="#d8daf0" fill-opacity="0.26"/><ellipse cx="1918.3" cy="663.7" rx="4.5" ry="2.4" transform="rotate(-19 1918.3 663.7)" fill="#d8daf0" fill-opacity="0.24"/><ellipse cx="1947.6" cy="659.0" rx="4.5" ry="2.4" transform="rotate(-19 1947.6 659.0)" fill="#d8daf0" fill-opacity="0.23"/><ellipse cx="1976.9" cy="654.4" rx="4.5" ry="2.4" transform="rotate(-19 1976.9 654.4)" fill="#d8daf0" fill-opacity="0.22"/><ellipse cx="2006.2" cy="649.7" rx="4.5" ry="2.4" transform="rotate(-19 2006.2 649.7)" fill="#d8daf0" fill-opacity="0.20"/><ellipse cx="1860.5" cy="685.1" rx="4.6" ry="2.5" transform="rotate(-18 1860.5 685.1)" fill="#d8daf0" fill-opacity="0.33"/><ellipse cx="1889.8" cy="680.6" rx="4.6" ry="2.5" transform="rotate(-18 1889.8 680.6)" fill="#d8daf0" fill-opacity="0.31"/><ellipse cx="1919.1" cy="676.0" rx="4.6" ry="2.5" transform="rotate(-18 1919.1 676.0)" fill="#d8daf0" fill-opacity="0.30"/><ellipse cx="1948.4" cy="671.5" rx="4.6" ry="2.5" transform="rotate(-18 1948.4 671.5)" fill="#d8daf0" fill-opacity="0.28"/><ellipse cx="1977.7" cy="667.0" rx="4.6" ry="2.5" transform="rotate(-18 1977.7 667.0)" fill="#d8daf0" fill-opacity="0.27"/><ellipse cx="2007.0" cy="662.4" rx="4.6" ry="2.5" transform="rotate(-18 2007.0 662.4)" fill="#d8daf0" fill-opacity="0.25"/><ellipse cx="1861.4" cy="697.5" rx="4.7" ry="2.7" transform="rotate(-17 1861.4 697.5)" fill="#d8daf0" fill-opacity="0.39"/><ellipse cx="1890.7" cy="693.1" rx="4.7" ry="2.7" transform="rotate(-17 1890.7 693.1)" fill="#d8daf0" fill-opacity="0.37"/><ellipse cx="1920.0" cy="688.7" rx="4.7" ry="2.7" transform="rotate(-17 1920.0 688.7)" fill="#d8daf0" fill-opacity="0.36"/><ellipse cx="1949.3" cy="684.4" rx="4.7" ry="2.7" transform="rotate(-17 1949.3 684.4)" fill="#d8daf0" fill-opacity="0.34"/><ellipse cx="1978.6" cy="680.0" rx="4.7" ry="2.7" transform="rotate(-17 1978.6 680.0)" fill="#d8daf0" fill-opacity="0.33"/><ellipse cx="2007.9" cy="675.6" rx="4.7" ry="2.7" transform="rotate(-17 2007.9 675.6)" fill="#d8daf0" fill-opacity="0.31"/><ellipse cx="1862.3" cy="710.4" rx="4.8" ry="2.8" transform="rotate(-16 1862.3 710.4)" fill="#d8daf0" fill-opacity="0.45"/><ellipse cx="1891.6" cy="706.1" rx="4.8" ry="2.8" transform="rotate(-16 1891.6 706.1)" fill="#d8daf0" fill-opacity="0.44"/><ellipse cx="1920.9" cy="701.9" rx="4.8" ry="2.8" transform="rotate(-16 1920.9 701.9)" fill="#d8daf0" fill-opacity="0.42"/><ellipse cx="1950.2" cy="697.7" rx="4.8" ry="2.8" transform="rotate(-16 1950.2 697.7)" fill="#d8daf0" fill-opacity="0.41"/><ellipse cx="1979.5" cy="693.5" rx="4.8" ry="2.8" transform="rotate(-16 1979.5 693.5)" fill="#d8daf0" fill-opacity="0.39"/><ellipse cx="2008.8" cy="689.3" rx="4.8" ry="2.8" transform="rotate(-16 2008.8 689.3)" fill="#d8daf0" fill-opacity="0.38"/><ellipse cx="1863.2" cy="723.7" rx="4.9" ry="3.0" transform="rotate(-14 1863.2 723.7)" fill="#d8daf0" fill-opacity="0.51"/><ellipse cx="1892.5" cy="719.7" rx="4.9" ry="3.0" transform="rotate(-14 1892.5 719.7)" fill="#d8daf0" fill-opacity="0.50"/><ellipse cx="1921.8" cy="715.7" rx="4.9" ry="3.0" transform="rotate(-14 1921.8 715.7)" fill="#d8daf0" fill-opacity="0.49"/><ellipse cx="1951.1" cy="711.6" rx="4.9" ry="3.0" transform="rotate(-14 1951.1 711.6)" fill="#d8daf0" fill-opacity="0.48"/><ellipse cx="1980.4" cy="707.6" rx="4.9" ry="3.0" transform="rotate(-14 1980.4 707.6)" fill="#d8daf0" fill-opacity="0.46"/><ellipse cx="2009.7" cy="703.5" rx="4.9" ry="3.0" transform="rotate(-14 2009.7 703.5)" fill="#d8daf0" fill-opacity="0.45"/><ellipse cx="1864.2" cy="737.8" rx="5.0" ry="3.2" transform="rotate(-13 1864.2 737.8)" fill="#d8daf0" fill-opacity="0.58"/><ellipse cx="1893.5" cy="733.9" rx="5.0" ry="3.2" transform="rotate(-13 1893.5 733.9)" fill="#d8daf0" fill-opacity="0.57"/><ellipse cx="1922.8" cy="730.0" rx="5.0" ry="3.2" transform="rotate(-13 1922.8 730.0)" fill="#d8daf0" fill-opacity="0.56"/><ellipse cx="1952.1" cy="726.2" rx="5.0" ry="3.2" transform="rotate(-13 1952.1 726.2)" fill="#d8daf0" fill-opacity="0.55"/><ellipse cx="1981.4" cy="722.3" rx="5.0" ry="3.2" transform="rotate(-13 1981.4 722.3)" fill="#d8daf0" fill-opacity="0.54"/><ellipse cx="2010.7" cy="718.5" rx="5.0" ry="3.2" transform="rotate(-13 2010.7 718.5)" fill="#d8daf0" fill-opacity="0.53"/><ellipse cx="1865.2" cy="752.5" rx="5.1" ry="3.4" transform="rotate(-12 1865.2 752.5)" fill="#d8daf0" fill-opacity="0.64"/><ellipse cx="1894.5" cy="748.9" rx="5.1" ry="3.4" transform="rotate(-12 1894.5 748.9)" fill="#d8daf0" fill-opacity="0.63"/><ellipse cx="1923.8" cy="745.2" rx="5.1" ry="3.4" transform="rotate(-12 1923.8 745.2)" fill="#d8daf0" fill-opacity="0.62"/><ellipse cx="1953.1" cy="741.6" rx="5.1" ry="3.4" transform="rotate(-12 1953.1 741.6)" fill="#d8daf0" fill-opacity="0.62"/><ellipse cx="1982.4" cy="737.9" rx="5.1" ry="3.4" transform="rotate(-12 1982.4 737.9)" fill="#d8daf0" fill-opacity="0.61"/><ellipse cx="2011.7" cy="734.3" rx="5.1" ry="3.4" transform="rotate(-12 2011.7 734.3)" fill="#d8daf0" fill-opacity="0.60"/><ellipse cx="1866.3" cy="768.2" rx="5.3" ry="3.6" transform="rotate(-10 1866.3 768.2)" fill="#d8daf0" fill-opacity="0.69"/><ellipse cx="1895.6" cy="764.7" rx="5.3" ry="3.6" transform="rotate(-10 1895.6 764.7)" fill="#d8daf0" fill-opacity="0.68"/><ellipse cx="1924.9" cy="761.3" rx="5.3" ry="3.6" transform="rotate(-10 1924.9 761.3)" fill="#d8daf0" fill-opacity="0.68"/><ellipse cx="1954.2" cy="757.9" rx="5.3" ry="3.6" transform="rotate(-10 1954.2 757.9)" fill="#d8daf0" fill-opacity="0.68"/><ellipse cx="1983.5" cy="754.4" rx="5.3" ry="3.6" transform="rotate(-10 1983.5 754.4)" fill="#d8daf0" fill-opacity="0.67"/><ellipse cx="1867.5" cy="784.9" rx="5.4" ry="3.8" transform="rotate(-8 1867.5 784.9)" fill="#d8daf0" fill-opacity="0.72"/><ellipse cx="1896.8" cy="781.6" rx="5.4" ry="3.8" transform="rotate(-8 1896.8 781.6)" fill="#d8daf0" fill-opacity="0.72"/><ellipse cx="1926.1" cy="778.4" rx="5.4" ry="3.8" transform="rotate(-8 1926.1 778.4)" fill="#d8daf0" fill-opacity="0.72"/><ellipse cx="1955.4" cy="775.2" rx="5.4" ry="3.8" transform="rotate(-8 1955.4 775.2)" fill="#d8daf0" fill-opacity="0.72"/><ellipse cx="1984.7" cy="772.0" rx="5.4" ry="3.8" transform="rotate(-8 1984.7 772.0)" fill="#d8daf0" fill-opacity="0.72"/><ellipse cx="1868.7" cy="802.7" rx="5.6" ry="4.0" transform="rotate(-7 1868.7 802.7)" fill="#d8daf0" fill-opacity="0.76"/><ellipse cx="1898.0" cy="799.7" rx="5.6" ry="4.0" transform="rotate(-7 1898.0 799.7)" fill="#d8daf0" fill-opacity="0.76"/><ellipse cx="1927.3" cy="796.8" rx="5.6" ry="4.0" transform="rotate(-7 1927.3 796.8)" fill="#d8daf0" fill-opacity="0.76"/><ellipse cx="1956.6" cy="793.8" rx="5.6" ry="4.0" transform="rotate(-7 1956.6 793.8)" fill="#d8daf0" fill-opacity="0.76"/><ellipse cx="1985.9" cy="790.8" rx="5.6" ry="4.0" transform="rotate(-7 1985.9 790.8)" fill="#d8daf0" fill-opacity="0.76"/><ellipse cx="1870.1" cy="821.9" rx="5.7" ry="4.3" transform="rotate(-5 1870.1 821.9)" fill="#d8daf0" fill-opacity="0.80"/><ellipse cx="1899.4" cy="819.2" rx="5.7" ry="4.3" transform="rotate(-5 1899.4 819.2)" fill="#d8daf0" fill-opacity="0.80"/><ellipse cx="1928.7" cy="816.4" rx="5.7" ry="4.3" transform="rotate(-5 1928.7 816.4)" fill="#d8daf0" fill-opacity="0.80"/><ellipse cx="1958.0" cy="813.7" rx="5.7" ry="4.3" transform="rotate(-5 1958.0 813.7)" fill="#d8daf0" fill-opacity="0.80"/><ellipse cx="1987.3" cy="810.9" rx="5.7" ry="4.3" transform="rotate(-5 1987.3 810.9)" fill="#d8daf0" fill-opacity="0.80"/><ellipse cx="1871.5" cy="842.4" rx="5.9" ry="4.5" transform="rotate(-4 1871.5 842.4)" fill="#d8daf0" fill-opacity="0.83"/><ellipse cx="1900.8" cy="839.9" rx="5.9" ry="4.5" transform="rotate(-4 1900.8 839.9)" fill="#d8daf0" fill-opacity="0.83"/><ellipse cx="1930.1" cy="837.4" rx="5.9" ry="4.5" transform="rotate(-4 1930.1 837.4)" fill="#d8daf0" fill-opacity="0.83"/><ellipse cx="1959.4" cy="834.9" rx="5.9" ry="4.5" transform="rotate(-4 1959.4 834.9)" fill="#d8daf0" fill-opacity="0.83"/><ellipse cx="1988.7" cy="832.4" rx="5.9" ry="4.5" transform="rotate(-4 1988.7 832.4)" fill="#d8daf0" fill-opacity="0.83"/><ellipse cx="1873.1" cy="864.3" rx="6.0" ry="4.7" transform="rotate(-2 1873.1 864.3)" fill="#d8daf0" fill-opacity="0.86"/><ellipse cx="1902.4" cy="862.0" rx="6.0" ry="4.7" transform="rotate(-2 1902.4 862.0)" fill="#d8daf0" fill-opacity="0.86"/><ellipse cx="1931.7" cy="859.7" rx="6.0" ry="4.7" transform="rotate(-2 1931.7 859.7)" fill="#d8daf0" fill-opacity="0.86"/><ellipse cx="1961.0" cy="857.4" rx="6.0" ry="4.7" transform="rotate(-2 1961.0 857.4)" fill="#d8daf0" fill-opacity="0.86"/><ellipse cx="1990.3" cy="855.1" rx="6.0" ry="4.7" transform="rotate(-2 1990.3 855.1)" fill="#d8daf0" fill-opacity="0.86"/><ellipse cx="1874.7" cy="887.3" rx="6.1" ry="4.9" transform="rotate(-1 1874.7 887.3)" fill="#d8daf0" fill-opacity="0.88"/><ellipse cx="1904.0" cy="885.1" rx="6.1" ry="4.9" transform="rotate(-1 1904.0 885.1)" fill="#d8daf0" fill-opacity="0.88"/><ellipse cx="1933.3" cy="883.0" rx="6.1" ry="4.9" transform="rotate(-1 1933.3 883.0)" fill="#d8daf0" fill-opacity="0.88"/><ellipse cx="1962.6" cy="880.8" rx="6.1" ry="4.9" transform="rotate(-1 1962.6 880.8)" fill="#d8daf0" fill-opacity="0.88"/><ellipse cx="1991.9" cy="878.7" rx="6.1" ry="4.9" transform="rotate(-1 1991.9 878.7)" fill="#d8daf0" fill-opacity="0.88"/><ellipse cx="1876.3" cy="911.0" rx="6.2" ry="5.0" transform="rotate(-0 1876.3 911.0)" fill="#d8daf0" fill-opacity="0.90"/><ellipse cx="1905.6" cy="909.0" rx="6.2" ry="5.0" transform="rotate(-0 1905.6 909.0)" fill="#d8daf0" fill-opacity="0.90"/><ellipse cx="1934.9" cy="906.9" rx="6.2" ry="5.0" transform="rotate(-0 1934.9 906.9)" fill="#d8daf0" fill-opacity="0.90"/><ellipse cx="1964.2" cy="904.9" rx="6.2" ry="5.0" transform="rotate(-0 1964.2 904.9)" fill="#d8daf0" fill-opacity="0.90"/><ellipse cx="1993.5" cy="902.9" rx="6.2" ry="5.0" transform="rotate(-0 1993.5 902.9)" fill="#d8daf0" fill-opacity="0.90"/><ellipse cx="1878.0" cy="935.0" rx="6.3" ry="5.0" transform="rotate(0 1878.0 935.0)" fill="#d8daf0" fill-opacity="0.90"/><ellipse cx="1907.3" cy="933.0" rx="6.3" ry="5.0" transform="rotate(0 1907.3 933.0)" fill="#d8daf0" fill-opacity="0.90"/><ellipse cx="1936.6" cy="931.0" rx="6.3" ry="5.0" transform="rotate(0 1936.6 931.0)" fill="#d8daf0" fill-opacity="0.90"/><ellipse cx="1965.9" cy="929.0" rx="6.3" ry="5.0" transform="rotate(0 1965.9 929.0)" fill="#d8daf0" fill-opacity="0.90"/><ellipse cx="1995.2" cy="927.0" rx="6.3" ry="5.0" transform="rotate(0 1995.2 927.0)" fill="#d8daf0" fill-opacity="0.90"/><ellipse cx="1850.4" cy="960.8" rx="6.3" ry="4.9" transform="rotate(0 1850.4 960.8)" fill="#d8daf0" fill-opacity="0.87"/><ellipse cx="1879.7" cy="959.0" rx="6.3" ry="4.9" transform="rotate(0 1879.7 959.0)" fill="#d8daf0" fill-opacity="0.87"/><ellipse cx="1909.0" cy="957.2" rx="6.3" ry="4.9" transform="rotate(0 1909.0 957.2)" fill="#d8daf0" fill-opacity="0.87"/><ellipse cx="1938.3" cy="955.4" rx="6.3" ry="4.9" transform="rotate(0 1938.3 955.4)" fill="#d8daf0" fill-opacity="0.87"/><ellipse cx="1967.6" cy="953.7" rx="6.3" ry="4.9" transform="rotate(0 1967.6 953.7)" fill="#d8daf0" fill-opacity="0.87"/><ellipse cx="1996.9" cy="951.9" rx="6.3" ry="4.9" transform="rotate(0 1996.9 951.9)" fill="#d8daf0" fill-opacity="0.87"/><ellipse cx="1852.0" cy="983.9" rx="6.3" ry="4.5" transform="rotate(1 1852.0 983.9)" fill="#d8daf0" fill-opacity="0.79"/><ellipse cx="1881.3" cy="982.7" rx="6.3" ry="4.5" transform="rotate(1 1881.3 982.7)" fill="#d8daf0" fill-opacity="0.79"/><ellipse cx="1910.6" cy="981.5" rx="6.3" ry="4.5" transform="rotate(1 1910.6 981.5)" fill="#d8daf0" fill-opacity="0.79"/><ellipse cx="1939.9" cy="980.3" rx="6.3" ry="4.5" transform="rotate(1 1939.9 980.3)" fill="#d8daf0" fill-opacity="0.79"/><ellipse cx="1969.2" cy="979.1" rx="6.3" ry="4.5" transform="rotate(1 1969.2 979.1)" fill="#d8daf0" fill-opacity="0.79"/><ellipse cx="1998.5" cy="977.9" rx="6.3" ry="4.5" transform="rotate(1 1998.5 977.9)" fill="#d8daf0" fill-opacity="0.79"/><ellipse cx="1853.6" cy="1005.9" rx="6.3" ry="3.9" transform="rotate(2 1853.6 1005.9)" fill="#d8daf0" fill-opacity="0.68"/><ellipse cx="1882.9" cy="1005.5" rx="6.3" ry="3.9" transform="rotate(2 1882.9 1005.5)" fill="#d8daf0" fill-opacity="0.68"/><ellipse cx="1912.2" cy="1005.2" rx="6.3" ry="3.9" transform="rotate(2 1912.2 1005.2)" fill="#d8daf0" fill-opacity="0.68"/><ellipse cx="1941.5" cy="1004.8" rx="6.3" ry="3.9" transform="rotate(2 1941.5 1004.8)" fill="#d8daf0" fill-opacity="0.68"/><ellipse cx="1970.8" cy="1004.4" rx="6.3" ry="3.9" transform="rotate(2 1970.8 1004.4)" fill="#d8daf0" fill-opacity="0.68"/><ellipse cx="2000.1" cy="1004.1" rx="6.3" ry="3.9" transform="rotate(2 2000.1 1004.1)" fill="#d8daf0" fill-opacity="0.68"/><ellipse cx="1855.1" cy="1026.6" rx="6.3" ry="3.4" transform="rotate(3 1855.1 1026.6)" fill="#d8daf0" fill-opacity="0.55"/><ellipse cx="1884.4" cy="1027.1" rx="6.3" ry="3.4" transform="rotate(3 1884.4 1027.1)" fill="#d8daf0" fill-opacity="0.55"/><ellipse cx="1913.7" cy="1027.6" rx="6.3" ry="3.4" transform="rotate(3 1913.7 1027.6)" fill="#d8daf0" fill-opacity="0.55"/><ellipse cx="1943.0" cy="1028.1" rx="6.3" ry="3.4" transform="rotate(3 1943.0 1028.1)" fill="#d8daf0" fill-opacity="0.55"/><ellipse cx="1972.3" cy="1028.6" rx="6.3" ry="3.4" transform="rotate(3 1972.3 1028.6)" fill="#d8daf0" fill-opacity="0.55"/><ellipse cx="2001.6" cy="1029.1" rx="6.3" ry="3.4" transform="rotate(3 2001.6 1029.1)" fill="#d8daf0" fill-opacity="0.55"/><ellipse cx="1856.5" cy="1045.8" rx="6.3" ry="2.8" transform="rotate(3 1856.5 1045.8)" fill="#d8daf0" fill-opacity="0.44"/><ellipse cx="1885.8" cy="1047.1" rx="6.3" ry="2.8" transform="rotate(3 1885.8 1047.1)" fill="#d8daf0" fill-opacity="0.44"/><ellipse cx="1915.1" cy="1048.4" rx="6.3" ry="2.8" transform="rotate(3 1915.1 1048.4)" fill="#d8daf0" fill-opacity="0.44"/><ellipse cx="1944.4" cy="1049.8" rx="6.3" ry="2.8" transform="rotate(3 1944.4 1049.8)" fill="#d8daf0" fill-opacity="0.44"/><ellipse cx="1973.7" cy="1051.1" rx="6.3" ry="2.8" transform="rotate(3 1973.7 1051.1)" fill="#d8daf0" fill-opacity="0.44"/><ellipse cx="2003.0" cy="1052.4" rx="6.3" ry="2.8" transform="rotate(3 2003.0 1052.4)" fill="#d8daf0" fill-opacity="0.44"/><ellipse cx="1857.8" cy="1063.7" rx="6.3" ry="2.4" transform="rotate(4 1857.8 1063.7)" fill="#d8daf0" fill-opacity="0.34"/><ellipse cx="1887.1" cy="1065.7" rx="6.3" ry="2.4" transform="rotate(4 1887.1 1065.7)" fill="#d8daf0" fill-opacity="0.34"/><ellipse cx="1916.4" cy="1067.7" rx="6.3" ry="2.4" transform="rotate(4 1916.4 1067.7)" fill="#d8daf0" fill-opacity="0.34"/><ellipse cx="1945.7" cy="1069.6" rx="6.3" ry="2.4" transform="rotate(4 1945.7 1069.6)" fill="#d8daf0" fill-opacity="0.34"/><ellipse cx="1975.0" cy="1071.6" rx="6.3" ry="2.4" transform="rotate(4 1975.0 1071.6)" fill="#d8daf0" fill-opacity="0.34"/><ellipse cx="2004.3" cy="1073.6" rx="6.3" ry="2.4" transform="rotate(4 2004.3 1073.6)" fill="#d8daf0" fill-opacity="0.34"/><ellipse cx="1859.0" cy="1080.2" rx="6.3" ry="2.1" transform="rotate(5 1859.0 1080.2)" fill="#d8daf0" fill-opacity="0.26"/><ellipse cx="1888.3" cy="1082.7" rx="6.3" ry="2.1" transform="rotate(5 1888.3 1082.7)" fill="#d8daf0" fill-opacity="0.26"/><ellipse cx="1917.6" cy="1085.3" rx="6.3" ry="2.1" transform="rotate(5 1917.6 1085.3)" fill="#d8daf0" fill-opacity="0.26"/><ellipse cx="1946.9" cy="1087.8" rx="6.3" ry="2.1" transform="rotate(5 1946.9 1087.8)" fill="#d8daf0" fill-opacity="0.26"/><ellipse cx="1976.2" cy="1090.3" rx="6.3" ry="2.1" transform="rotate(5 1976.2 1090.3)" fill="#d8daf0" fill-opacity="0.26"/><ellipse cx="2005.5" cy="1092.8" rx="6.3" ry="2.1" transform="rotate(5 2005.5 1092.8)" fill="#d8daf0" fill-opacity="0.26"/><ellipse cx="1860.1" cy="1095.6" rx="6.3" ry="1.8" transform="rotate(5 1860.1 1095.6)" fill="#d8daf0" fill-opacity="0.19"/><ellipse cx="1889.4" cy="1098.5" rx="6.3" ry="1.8" transform="rotate(5 1889.4 1098.5)" fill="#d8daf0" fill-opacity="0.19"/><ellipse cx="1918.7" cy="1101.4" rx="6.3" ry="1.8" transform="rotate(5 1918.7 1101.4)" fill="#d8daf0" fill-opacity="0.19"/><ellipse cx="1948.0" cy="1104.4" rx="6.3" ry="1.8" transform="rotate(5 1948.0 1104.4)" fill="#d8daf0" fill-opacity="0.19"/><ellipse cx="1977.3" cy="1107.3" rx="6.3" ry="1.8" transform="rotate(5 1977.3 1107.3)" fill="#d8daf0" fill-opacity="0.19"/><ellipse cx="2006.6" cy="1110.2" rx="6.3" ry="1.8" transform="rotate(5 2006.6 1110.2)" fill="#d8daf0" fill-opacity="0.19"/><ellipse cx="1861.2" cy="1110.0" rx="6.3" ry="1.6" transform="rotate(5 1861.2 1110.0)" fill="#d8daf0" fill-opacity="0.14"/><ellipse cx="1890.5" cy="1113.2" rx="6.3" ry="1.6" transform="rotate(5 1890.5 1113.2)" fill="#d8daf0" fill-opacity="0.14"/><ellipse cx="1919.8" cy="1116.4" rx="6.3" ry="1.6" transform="rotate(5 1919.8 1116.4)" fill="#d8daf0" fill-opacity="0.14"/><ellipse cx="1949.1" cy="1119.6" rx="6.3" ry="1.6" transform="rotate(5 1949.1 1119.6)" fill="#d8daf0" fill-opacity="0.14"/><ellipse cx="1978.4" cy="1122.8" rx="6.3" ry="1.6" transform="rotate(5 1978.4 1122.8)" fill="#d8daf0" fill-opacity="0.14"/><ellipse cx="2007.7" cy="1126.0" rx="6.3" ry="1.6" transform="rotate(5 2007.7 1126.0)" fill="#d8daf0" fill-opacity="0.14"/><ellipse cx="1862.1" cy="1123.4" rx="6.3" ry="1.5" transform="rotate(5 1862.1 1123.4)" fill="#d8daf0" fill-opacity="0.11"/><ellipse cx="1891.4" cy="1126.8" rx="6.3" ry="1.5" transform="rotate(5 1891.4 1126.8)" fill="#d8daf0" fill-opacity="0.11"/><ellipse cx="1920.7" cy="1130.3" rx="6.3" ry="1.5" transform="rotate(5 1920.7 1130.3)" fill="#d8daf0" fill-opacity="0.11"/><ellipse cx="1950.0" cy="1133.7" rx="6.3" ry="1.5" transform="rotate(5 1950.0 1133.7)" fill="#d8daf0" fill-opacity="0.11"/><ellipse cx="1979.3" cy="1137.1" rx="6.3" ry="1.5" transform="rotate(5 1979.3 1137.1)" fill="#d8daf0" fill-opacity="0.11"/><ellipse cx="1863.0" cy="1136.1" rx="6.3" ry="1.4" transform="rotate(6 1863.0 1136.1)" fill="#d8daf0" fill-opacity="0.08"/><ellipse cx="1892.3" cy="1139.7" rx="6.3" ry="1.4" transform="rotate(6 1892.3 1139.7)" fill="#d8daf0" fill-opacity="0.08"/></svg>
<div class="a" id="frame" style="left:127px;top:246px;width:1745px;height:940px;border-radius:34px;background:linear-gradient(180deg,rgba(175,214,252,1) 0%,rgba(175,214,252,1) 30%,rgba(175,214,252,.8) 60%,rgba(175,214,252,.62) 70%,rgba(175,214,252,.42) 95%,rgba(175,214,252,.4) 100%)"></div>
<div class="a" id="clip" style="left:0;top:0;width:1859px;height:1125px;overflow:hidden">
<div class="a" style="left:144px;top:262px;width:1715px;height:900px;background:#fff;border-radius:24px 24px 0 0"></div>
<div class="a" id="nav" style="left:144px;top:262px;width:1715px;height:60px;background:#13131d;border-radius:24px 24px 0 0"></div>
<div class="a" style="left:158.9px;top:276.0px;width:5.2px;height:5.2px;border-radius:50%;background:#fff"></div>
<div class="a" style="left:166.0px;top:276.0px;width:5.2px;height:5.2px;border-radius:50%;background:#fff"></div>
<div class="a" style="left:173.6px;top:276.09999999999997px;width:4.6px;height:4.6px;border-radius:50%;background:#fff"></div>
<div class="a" style="left:158.9px;top:283.09999999999997px;width:5.2px;height:5.2px;border-radius:50%;background:#fff"></div>
<div class="a" style="left:166.0px;top:283.09999999999997px;width:5.2px;height:5.2px;border-radius:50%;background:#fff"></div>
<div class="a" style="left:158.9px;top:290.29999999999995px;width:5.2px;height:5.2px;border-radius:50%;background:#fff"></div>
<div class="a" style="left:166.0px;top:290.29999999999995px;width:5.2px;height:5.2px;border-radius:50%;background:#fff"></div>
<div class="a" style="left:286px;top:264px;width:1.5px;height:50px;background:#2e3140"></div>
<svg class="a" style="left:1307.7px;top:288.5px" width="9" height="6"><path d="M0 0H8.5L4.25 5z" fill="#fff"/></svg>
<svg class="a" style="left:1396.8px;top:288.5px" width="9" height="6"><path d="M0 0H8.5L4.25 5z" fill="#fff"/></svg>
<svg class="a" style="left:1488.7px;top:288.5px" width="9" height="6"><path d="M0 0H8.5L4.25 5z" fill="#fff"/></svg>
<svg class="a" style="left:1565px;top:288.5px" width="9" height="6"><path d="M0 0H8.5L4.25 5z" fill="#fff"/></svg>
<svg class="a" style="left:1644.3px;top:288.5px" width="9" height="6"><path d="M0 0H8.5L4.25 5z" fill="#fff"/></svg>
<svg class="a" style="left:1686px;top:284px" width="14" height="14" viewBox="0 0 14 14"><circle cx="7" cy="7" r="6.9" fill="#fff"/><path d="M4.9 5.4c0-1.3 1-2.1 2.2-2.1 1.3 0 2.1.8 2.1 1.9 0 1.6-1.9 1.6-1.9 3.1" fill="none" stroke="#13131d" stroke-width="1.5"/><circle cx="7.2" cy="10.3" r=".95" fill="#13131d"/></svg>
<svg class="a" style="left:1718.5px;top:284.5px" width="15" height="12" viewBox="0 0 15 12"><rect x="0" y="0" width="14.3" height="11.2" rx="1" fill="#fff"/><path d="M1.2 1.6L7.15 5.6 13.1 1.6" fill="none" stroke="#13131d" stroke-width="1.4"/></svg>
<svg class="a" style="left:1751.5px;top:283.5px" width="14" height="14" viewBox="0 0 14 14"><path d="M7 .3c.6 0 1 .4 1 .9v.5c2 .5 3.3 2.2 3.3 4.3v3.3l1.5 1.7v.7H1.2V11l1.5-1.7V6c0-2.1 1.3-3.8 3.3-4.3v-.5c0-.5.4-.9 1-.9z" fill="#fff"/><path d="M5.4 12.6h3.2c0 .8-.7 1.3-1.6 1.3s-1.6-.5-1.6-1.3z" fill="#fff"/></svg>
<svg class="a" style="left:1789px;top:271px" width="41" height="41" viewBox="0 0 41 41"><defs><radialGradient id="avg" cx=".5" cy=".4" r=".65"><stop offset="0" stop-color="#ffffff"/><stop offset=".8" stop-color="#f7f7f7"/><stop offset="1" stop-color="#e9e9e9"/></radialGradient><linearGradient id="avh" x1="0" y1="0" x2="0" y2="1"><stop offset="0" stop-color="#a8a8a8"/><stop offset=".5" stop-color="#cbcbcb"/><stop offset="1" stop-color="#d8d8d8"/></linearGradient><linearGradient id="avs" x1="0" y1="0" x2="0" y2="1"><stop offset="0" stop-color="#cfcfcf"/><stop offset="1" stop-color="#f4f4f4"/></linearGradient><clipPath id="avc"><circle cx="20.5" cy="20.5" r="20.2"/></clipPath></defs>
<circle cx="20.5" cy="20.5" r="20.2" fill="url(#avg)"/><g clip-path="url(#avc)"><path d="M3 41c.5-7 5-10.5 10.5-12 2.5-.7 4-1.5 4.5-3h5c.5 1.5 2 2.3 4.5 3 5.5 1.5 10 5 10.5 12z" fill="url(#avs)"/><path d="M17 21h7v6c-1.2 1.4-5.8 1.4-7 0z" fill="#c4c4c4"/><ellipse cx="20.5" cy="15" rx="7.6" ry="10" fill="url(#avh)"/><path d="M12.6 12.5c0-5 3.3-8.6 7.9-8.6s7.9 3.6 7.9 8.6c-1.5-2.5-4.5-3.6-7.9-3.6s-6.4 1.1-7.9 3.6z" fill="#9c9c9c"/></g></svg>
<div class="a" style="left:1827px;top:331px;width:60px;height:38.5px;background:#13131d;border-radius:3px"></div>
<svg class="a" style="left:170.7px;top:394.3px" width="18" height="18" viewBox="0 0 18 18"><g transform="rotate(45 9 9)" fill="#babdc4"><rect x="5.9" y="1.2" width="6.2" height="2" rx=".6"/><path d="M6.9 3h4.2l.6 5 2.1 1.9v1.2H4.2V9.9l2.1-1.9z"/><path d="M8.4 11h1.2l-.3 6.2h-.6z"/></g></svg>
<svg class="a" style="left:296.3px;top:394.3px" width="18" height="18" viewBox="0 0 18 18"><g transform="rotate(45 9 9)" fill="#babdc4"><rect x="5.9" y="1.2" width="6.2" height="2" rx=".6"/><path d="M6.9 3h4.2l.6 5 2.1 1.9v1.2H4.2V9.9l2.1-1.9z"/><path d="M8.4 11h1.2l-.3 6.2h-.6z"/></g></svg>
<svg class="a" style="left:402px;top:394.3px" width="18" height="18" viewBox="0 0 18 18"><g transform="rotate(45 9 9)" fill="#babdc4"><rect x="5.9" y="1.2" width="6.2" height="2" rx=".6"/><path d="M6.9 3h4.2l.6 5 2.1 1.9v1.2H4.2V9.9l2.1-1.9z"/><path d="M8.4 11h1.2l-.3 6.2h-.6z"/></g></svg>
<svg class="a" style="left:495.3px;top:394.3px" width="18" height="18" viewBox="0 0 18 18"><g transform="rotate(45 9 9)" fill="#babdc4"><rect x="5.9" y="1.2" width="6.2" height="2" rx=".6"/><path d="M6.9 3h4.2l.6 5 2.1 1.9v1.2H4.2V9.9l2.1-1.9z"/><path d="M8.4 11h1.2l-.3 6.2h-.6z"/></g></svg>
<svg class="a" style="left:643.3px;top:394.3px" width="18" height="18" viewBox="0 0 18 18"><g transform="rotate(45 9 9)" fill="#babdc4"><rect x="5.9" y="1.2" width="6.2" height="2" rx=".6"/><path d="M6.9 3h4.2l.6 5 2.1 1.9v1.2H4.2V9.9l2.1-1.9z"/><path d="M8.4 11h1.2l-.3 6.2h-.6z"/></g></svg>
<div class="a" style="left:254.7px;top:401.5px;width:4px;height:4px;border-radius:50%;background:#f6861f"></div>
<svg class="a" style="left:272px;top:401px" width="6" height="4"><path d="M0 0H5.8L2.9 3.4z" fill="#2a2a35"/></svg>
<svg class="a" style="left:808.5px;top:396px" width="14" height="15"><rect x="0" y="0.8" width="13.8" height="2.4" fill="#1f1f2b"/><rect x="0" y="6.2" width="13.8" height="2.4" fill="#1f1f2b"/><rect x="0" y="11.6" width="13.8" height="2.4" fill="#1f1f2b"/></svg>
<svg class="a" style="left:917.5px;top:395.5px" width="15" height="15"><circle cx="7.5" cy="7.5" r="6.5" fill="none" stroke="#1f1f2b" stroke-width="1.4"/><path d="M7.5 4.2v6.6M4.2 7.5h6.6" stroke="#1f1f2b" stroke-width="1.4"/></svg>
<div class="a" style="left:165px;top:428.5px;width:1700px;height:1.2px;background:#e4e6ee"></div>
<div class="a" style="left:165px;top:426.8px;width:118px;height:2.6px;background:#5a3be6;border-radius:1px"></div>
<div class="a" style="left:165px;top:454.5px;width:1590px;height:42.5px;border:1.3px solid #dce5f0;border-radius:5px"></div>
<svg class="a" style="left:181px;top:468.5px" width="15" height="15"><circle cx="6" cy="6" r="4.6" fill="none" stroke="#1f1f2b" stroke-width="1.8"/><path d="M9.4 9.4l4.3 4.3" stroke="#1f1f2b" stroke-width="2" stroke-linecap="round"/></svg>
<div class="a" style="left:205.4px;top:466px;width:147.6px;height:19.2px;background:#2b3441;border-radius:3px"></div>
<svg class="a" style="left:333.5px;top:469.5px" width="13" height="13"><path d="M1.2 1.2l10.4 10.4M11.6 1.2L1.2 11.6" stroke="#fff" stroke-width="1.6"/></svg>
<svg class="a" style="left:1693px;top:469.5px" width="14" height="14"><path d="M1.2 1.2l11.2 11.2M12.4 1.2L1.2 12.4" stroke="#1f1f2b" stroke-width="1.7"/></svg>
<svg class="a" style="left:1722px;top:467px" width="17" height="17" viewBox="0 0 17 17" fill="none" stroke="#2a2a35" stroke-width="1.25"><path d="M2.4 4.1h9.6M5 8.9h9.4M2.4 13.7h9.6"/><path d="M12 4.1a1.45 1.45 0 1 0 0-.01M12 13.7a1.45 1.45 0 1 0 0-.01"/><path d="M5 8.9a1.45 1.45 0 1 1 0-.01"/></svg>
<svg class="a" style="left:0;top:0" width="1859" height="520"><g fill="none" stroke="#1f1f2b" stroke-width="1.5"><path d="M1773.2 475.2A4.6 4.6 0 0 1 1781.9 474.6"/><path d="M1781.8 476.9A4.6 4.6 0 0 1 1773.1 477.5"/></g><path d="M1779.9 474.6H1784.2L1782.05 477.7Z" fill="#1f1f2b"/><path d="M1770.8 477.4H1775.1L1772.95 474.2Z" fill="#1f1f2b"/></svg>
<div class="card" style="left:164.6px;top:575.3px;width:343.1px;height:217.5px"></div>
<div class="card" style="left:522.3px;top:575.3px;width:342.30000000000007px;height:217.5px"></div>
<div class="card" style="left:880.2px;top:575.3px;width:342.79999999999995px;height:217.5px"></div>
<div class="card" style="left:1237.9px;top:575.3px;width:342.0px;height:217.5px"></div>
<div class="card" style="left:1595.6px;top:575.3px;width:304.4000000000001px;height:217.5px"></div>
<div class="ic" style="left:312.9px;top:598.1px"></div>
<div class="ic" style="left:671.7px;top:598.1px"></div>
<div class="ic" style="left:1028.7px;top:598.1px"></div>
<div class="ic" style="left:1386.5px;top:598.1px"></div>
<div class="ic" style="left:1743.7px;top:598.1px"></div>
<svg class="a" style="left:0;top:0" width="1859" height="1125"><polyline points="330.1,616.5 334.5,611.9 338.9,617 343.8,612.1" fill="none" stroke="#5636ea" stroke-width="2" stroke-linecap="round" stroke-linejoin="round"/><rect x="329.1" y="624.3" width="2.4" height="5.9" rx=".6" fill="#5636ea"/><rect x="333.5" y="621.4" width="2.4" height="8.8" rx=".6" fill="#5636ea"/><rect x="337.9" y="624.3" width="2.4" height="5.9" rx=".6" fill="#5636ea"/><rect x="342.3" y="621.4" width="2.4" height="8.8" rx=".6" fill="#5636ea"/><rect x="325.9" y="629.5" width="20.6" height="1.4" rx=".7" fill="#5636ea"/><g fill="none" stroke="#5636ea" stroke-width="1.3" stroke-linejoin="round"><rect x="685.05" y="615.75" width="18" height="12.3" rx="1"/><path d="M690.6 615.1V613.3Q690.6 612.5 691.4 612.5H697.2Q698 612.5 698 613.3V615.1"/><path d="M685.3 615.9L687.3 621.6H691.4M697.4 621.6H701.4L703 615.9"/><ellipse cx="694.4" cy="621.7" rx="2.8" ry="1.5"/></g><g fill="none" stroke="#5636ea" stroke-width="1.5" stroke-linecap="round"><circle cx="1051.7" cy="620.9" r="9"/><path d="M1053.9 617.6C1053.4 616.6 1052.6 616.2 1051.7 616.2C1050.4 616.2 1049.5 617 1049.5 618.1C1049.5 620.3 1053.9 619.7 1053.9 622.1C1053.9 623.2 1052.9 624 1051.7 624C1050.7 624 1049.9 623.5 1049.5 622.7M1051.7 615.2V616.2M1051.7 624V625.9"/></g><g fill="none" stroke="#5636ea" stroke-width="1.3" stroke-linejoin="round"><path d="M1409.1 621.5H1399.6A9.3 9.3 0 0 0 1409.1 630.6Z"/><path d="M1408.4 612.3A8 8 0 1 1 1411.7 627.4L1411.5 620Q1411 615.5 1408.4 612.3Z"/><path d="M1408.4 612.3A8 8 0 0 0 1403.2 619H1410.6"/></g><g fill="none" stroke="#5636ea" stroke-width="1.4"><rect x="1758.3" y="613.4" width="18.4" height="16.3" rx="2.3"/><path d="M1758.2 617.6H1776.8"/><path d="M1761.3 611.2V615.3M1773.6 611.2V615.3" stroke-linecap="round"/></g><rect x="1760.4" y="619.7" width="1.6" height="1.6" fill="#5636ea"/><rect x="1763.5" y="619.7" width="1.6" height="1.6" fill="#5636ea"/><rect x="1766.6000000000001" y="619.7" width="1.6" height="1.6" fill="#5636ea"/><rect x="1769.7" y="619.7" width="1.6" height="1.6" fill="#5636ea"/><rect x="1772.8" y="619.7" width="1.6" height="1.6" fill="#5636ea"/><rect x="1760.4" y="622.9000000000001" width="1.6" height="1.6" fill="#5636ea"/><rect x="1763.5" y="622.9000000000001" width="1.6" height="1.6" fill="#5636ea"/><rect x="1766.6000000000001" y="622.9000000000001" width="1.6" height="1.6" fill="#5636ea"/><rect x="1769.7" y="622.9000000000001" width="1.6" height="1.6" fill="#5636ea"/><rect x="1772.8" y="622.9000000000001" width="1.6" height="1.6" fill="#5636ea"/><rect x="1760.4" y="625.9000000000001" width="1.6" height="1.6" fill="#5636ea"/><rect x="1763.5" y="625.9000000000001" width="1.6" height="1.6" fill="#5636ea"/><rect x="1766.6000000000001" y="625.9000000000001" width="1.6" height="1.6" fill="#5636ea"/><rect x="1769.7" y="625.9000000000001" width="1.6" height="1.6" fill="#5636ea"/></svg>
<div class="card" style="left:164.6px;top:823.5px;width:697.1px;height:400px"></div>
<div class="card" style="left:877.8px;top:823.5px;width:522.3px;height:400px"></div>
<div class="card" style="left:1416.2px;top:823.5px;width:483.79999999999995px;height:400px"></div>
<svg class="a" style="left:0;top:0" width="730" height="1125"><path d="M317.7,910.3 L325.7,912.6 L333.6,914.9 L341.6,917.0 L349.7,919.1 L357.7,921.0 L365.8,922.9 L373.9,924.7 L382.0,926.4 L390.1,928.0 L398.2,929.6 L406.4,931.0 L414.5,932.4 L422.7,933.7 L430.9,934.9 L439.1,936.0 L447.3,937.0 L455.6,937.9 L463.8,938.7 L472.1,939.5 L480.3,940.2 L488.6,940.8 L496.8,941.3 L505.1,941.7 L513.4,942.0 L521.7,942.2 L529.9,942.4 L538.2,942.4 L546.5,942.4 L546.5,937.7 L560.2,947.0 L571.1,949.1 L582.0,951.1 L593.0,952.9 L581.8,962.2 L572.7,969.0 L582.2,969.6 L587.3,970.5 L599.3,970.4 L605.9,966.8 L608.6,958.5 L608.3,965.3 L620.8,970.4 L633.2,965.3 L637.9,968.5 L643.6,972.7 L636.8,974.2 L626.5,975.4 L617.4,979.4 L612.6,984.8 L609.8,992.5 L614.4,994.6 L613.4,1003.5 L612.5,1013.6 L614.1,1022.2 L616.4,1027.6 L619.4,1030.5 L622.9,1028.1 L627.5,1018.4 L624.3,1004.9 L625.1,994.9 L628.6,987.0 L635.3,976.2 L646.3,979.9 L649.5,984.5 L650.7,993.1 L649.0,1000.8 L654.8,997.5 L658.1,995.2 L660.1,1003.1 L661.7,1007.9 L660.6,1013.1 L656.7,1017.4 L654.6,1022.7 L654.0,1025.3 L661.8,1028.1 L670.9,1026.1 L680.0,1019.0 L686.4,1012.8 L693.2,1004.7 L691.0,1000.0 L703.7,997.0 L715.5,992.0 L713.7,983.5 L724.5,971.0 L733.6,968.8 L742.6,966.6 L751.7,964.3 L757.4,947.3 L762.8,930.4 L776.4,943.1 L790.3,955.7 L782.8,963.2 L775.1,970.7 L767.3,978.1 L767.2,991.0 L775.8,1001.6 L759.8,1009.8 L751.4,1014.2 L742.9,1018.5 L743.0,1023.0 L744.3,1030.4 L740.2,1044.2 L737.9,1047.3 L739.3,1051.4 L735.6,1068.3 L734.5,1072.4 L743.8,1092.1 L734.3,1100.5 L717.4,1114.7 L707.3,1128.2 L696.9,1141.7 L694.5,1160.9 L700.7,1172.5 L707.0,1184.1 L713.3,1195.5 L714.6,1209.7 L715.8,1223.8 L708.1,1226.3 L692.4,1205.1 L687.3,1193.3 L682.4,1181.5 L667.7,1169.7 L657.7,1175.9 L640.9,1170.3 L630.3,1171.9 L619.7,1173.4 L607.9,1173.0 L613.2,1187.6 L602.4,1188.3 L590.9,1186.5 L579.4,1184.5 L562.1,1182.5 L547.1,1192.7 L535.7,1199.5 L524.1,1206.2 L526.0,1228.4 L513.3,1218.9 L500.8,1209.3 L491.0,1194.7 L481.5,1179.9 L462.5,1188.6 L448.2,1177.5 L438.6,1164.2 L429.2,1150.8 L411.8,1148.7 L411.1,1154.3 L396.1,1152.2 L381.1,1149.9 L369.0,1143.0 L357.1,1135.9 L345.3,1128.7 L346.6,1126.2 L334.2,1124.7 L321.8,1123.0 L319.3,1111.6 L313.5,1105.1 L311.2,1101.3 L298.6,1093.0 L293.2,1089.7 L293.2,1081.9 L289.1,1070.4 L287.3,1062.1 L284.6,1053.6 L285.7,1046.1 L282.8,1038.7 L279.7,1022.1 L277.8,1009.2 L282.5,1003.4 L284.8,991.0 L286.3,978.4 L293.4,967.6 L300.1,950.1 L301.9,941.0 L303.9,933.2 L303.5,920.1 L304.3,914.2 L312.5,919.0 L318.6,922.1 L315.4,930.1 L318.8,933.7 L322.7,924.6 L322.3,918.1 L322.1,911.6Z" fill="#dae4fb"/>
<g fill="none" stroke="#fff" stroke-width="1.6" stroke-linejoin="round">
<path d="M302.4,941.0 L308.8,943.7 L313.3,952.7 L323.7,954.3 L337.7,955.4 L343.2,955.5 L351.8,957.6 L360.5,959.6"/>
<path d="M367.6,923.3 L364.1,938.9 L360.6,954.5 L360.5,959.6 L361.0,966.1 L354.0,977.2 L353.6,986.0 L348.7,1007.9"/>
<path d="M284.8,991.0 L293.7,993.7 L302.6,996.3 L311.6,998.7 L320.6,1001.1 L329.6,1003.4 L338.6,1005.6 L347.6,1007.7 L356.7,1009.7 L365.8,1011.6 L374.9,1013.4 L384.1,1015.1 L393.2,1016.7 L402.4,1018.3"/>
<path d="M322.2,1001.6 L319.1,1013.7 L316.0,1025.8 L312.9,1037.9 L320.4,1050.1 L328.2,1062.3 L336.2,1074.4 L344.5,1086.4 L353.1,1098.4 L356.7,1108.0 L346.6,1126.2"/>
<path d="M375.4,1013.5 L373.1,1025.8 L370.7,1038.1 L368.3,1050.4 L365.9,1062.7 L363.5,1074.9 L360.9,1085.9 L353.1,1098.4"/>
<path d="M375.6,925.1 L373.0,937.1 L377.4,946.8 L381.5,956.4 L379.7,970.0 L391.8,986.1 L407.3,987.5 L404.8,1002.9 L402.4,1018.3"/>
<path d="M408.3,981.4 L407.3,987.5"/>
<path d="M408.3,981.4 L416.9,982.7 L425.6,983.9 L434.3,985.1 L443.0,986.2 L451.7,987.1 L460.4,988.0 L469.1,988.8"/>
<path d="M402.4,1018.3 L400.4,1030.6 L409.6,1032.0 L418.8,1033.3 L417.1,1045.7 L415.3,1058.1 L413.6,1070.5 L411.9,1082.9 L410.0,1097.0 L408.0,1111.0 L406.1,1125.1 L404.1,1139.1 L402.2,1153.1"/>
<path d="M418.8,1033.3 L428.0,1034.6 L437.2,1035.7 L446.4,1036.7 L455.6,1037.6 L464.9,1038.5 L465.9,1026.0 L467.0,1013.6 L468.0,1001.2 L469.1,988.8 L470.1,976.4 L471.2,964.1 L472.2,951.8 L473.3,939.6"/>
<path d="M470.1,977.2 L479.3,977.9 L488.5,978.5 L497.7,979.1 L507.0,979.5 L516.2,979.8 L525.4,980.0 L534.7,980.1"/>
<path d="M467.0,1013.6 L477.0,1014.4 L487.0,1015.0 L497.0,1015.6 L507.0,1016.0 L517.0,1016.4 L527.7,1019.7 L535.0,1022.9"/>
<path d="M464.9,1038.5 L474.1,1039.2 L483.4,1039.8 L482.6,1052.3 L481.8,1064.8 L481.0,1077.3 L480.2,1089.8"/>
<path d="M482.6,1052.3 L493.2,1052.9 L503.7,1053.4 L514.3,1053.8 L524.9,1054.0 L535.5,1054.1 L546.1,1054.1 L552.8,1065.3 L553.1,1081.6 L553.3,1097.9 L555.2,1111.6 L555.1,1133.6"/>
<path d="M363.5,1074.9 L373.2,1076.8 L382.9,1078.5 L392.6,1080.1 L402.4,1081.6 L412.1,1083.0 L421.9,1084.3 L431.7,1085.4 L441.5,1086.5 L451.3,1087.5 L461.1,1088.4 L470.9,1089.2 L469.9,1101.7 L468.8,1114.1 L467.8,1126.6 L466.7,1139.0 L465.7,1151.4 L453.4,1150.5 L441.1,1149.3 L428.8,1148.0"/>
<path d="M480.2,1089.8 L490.6,1090.4 L501.1,1090.9 L511.5,1091.3 L521.9,1091.5 L532.4,1091.7 L542.8,1091.7 L553.2,1091.6"/>
<path d="M470.9,1089.2 L470.4,1095.4 L480.3,1096.1 L490.2,1096.7 L500.0,1097.1 L499.0,1121.4 L510.7,1125.0 L522.5,1128.4 L534.4,1131.7 L544.7,1132.7 L555.1,1133.6 L559.8,1141.5 L562.8,1153.9 L566.0,1166.3"/>
<path d="M529.6,942.4 L531.1,954.6 L532.7,967.0 L534.7,980.1 L535.6,988.0 L535.5,1010.4 L535.0,1022.9 L539.5,1035.4 L541.6,1046.6 L551.1,1046.6 L560.6,1046.5 L570.1,1046.3 L579.6,1046.0 L582.5,1048.1"/>
<path d="M535.5,1010.4 L544.8,1010.4 L554.2,1010.3 L563.6,1010.1 L572.9,1009.8 L582.3,1009.4 L588.2,1021.5 L589.2,1034.0 L585.2,1045.5 L582.5,1048.1 L589.7,1059.0 L595.9,1067.4 L601.5,1079.6 L606.6,1089.3 L603.6,1095.8 L602.1,1102.1 L596.9,1115.0 L590.5,1127.9 L589.6,1140.4 L588.7,1153.0 L586.1,1165.6"/>
<path d="M572.8,970.0 L571.4,978.8 L568.2,986.3 L567.6,993.8 L578.6,1003.3 L582.3,1009.4"/>
<path d="M588.2,1021.5 L601.0,1020.7 L613.9,1019.7"/>
<path d="M587.3,970.5 L599.8,977.2 L607.7,977.8 L612.8,987.3"/>
<path d="M553.3,1097.9 L564.3,1097.6 L575.3,1097.3 L586.3,1096.8 L597.2,1096.2 L595.4,1102.6 L602.1,1102.1"/>
<path d="M617.2,1028.7 L619.3,1053.1 L620.1,1069.4 L616.5,1078.5 L606.6,1089.3"/>
<path d="M617.2,1028.7 L629.6,1027.5 L642.1,1026.1 L654.5,1025.3"/>
<path d="M642.1,1026.1 L644.0,1042.6 L645.8,1059.1"/>
<path d="M616.5,1078.5 L626.6,1076.3 L637.7,1071.4 L645.8,1059.1 L658.0,1062.7 L668.0,1065.1 L675.8,1052.6 L682.6,1035.0"/>
<path d="M680.6,1017.9 L682.8,1031.8 L685.1,1045.8 L696.1,1043.9 L707.1,1041.9 L718.0,1039.7 L728.9,1037.4"/>
<path d="M694.8,1044.1 L695.9,1050.5 L706.1,1043.6 L712.4,1046.2"/>
<path d="M686.8,1013.2 L687.4,1016.5 L697.3,1014.7 L707.2,1012.8 L717.1,1010.8 L727.0,1008.7 L734.4,1014.7 L742.8,1017.9"/>
<path d="M734.4,1014.7 L734.2,1026.3 L732.4,1035.7 L733.4,1047.0 L739.3,1051.4"/>
<path d="M668.0,1065.1 L675.4,1075.4 L678.8,1078.7 L691.8,1072.8 L696.5,1060.6 L712.4,1046.2"/>
<path d="M675.4,1075.4 L660.4,1088.9"/>
<path d="M603.6,1095.8 L614.6,1094.8 L625.5,1093.7 L636.5,1092.4 L647.4,1091.0 L658.3,1089.5 L669.1,1087.9 L680.0,1086.1 L691.3,1084.5 L702.6,1082.7 L713.9,1080.7 L725.1,1078.7 L736.4,1076.4"/>
<path d="M680.0,1086.1 L668.7,1097.9 L657.0,1109.5"/>
<path d="M596.9,1115.0 L607.2,1114.3 L617.5,1113.5 L627.9,1112.6 L638.2,1111.6 L648.5,1110.5 L658.7,1109.3 L669.0,1107.9"/>
<path d="M618.0,1113.5 L618.5,1126.0 L619.0,1138.5 L619.5,1151.0 L619.9,1163.4"/>
<path d="M644.0,1111.0 L647.6,1124.4 L651.2,1137.9 L655.8,1159.9"/>
<path d="M669.0,1107.9 L682.7,1124.9 L696.9,1141.7"/>
<path d="M668.7,1105.5 L679.6,1103.9 L690.5,1102.2 L703.6,1108.6 L716.9,1114.8"/>
<path d="M559.8,1141.5 L574.7,1141.1 L589.6,1140.4"/>
<path d="M728.9,1037.4 L733.2,1052.8"/>
</g><circle cx="390.9" cy="1035.9" r="12.4" fill="#4f82fb" fill-opacity=".26" stroke="#4179fb" stroke-width="1.3"/><circle cx="390.9" cy="1035.9" r="2.1" fill="#1a5bfb"/><circle cx="451.8" cy="1055.6" r="7" fill="#4f82fb" fill-opacity=".26" stroke="#4179fb" stroke-width="1.3"/><circle cx="451.8" cy="1055.6" r="2.1" fill="#1a5bfb"/><circle cx="525.9" cy="1038.8" r="7" fill="#4f82fb" fill-opacity=".26" stroke="#4179fb" stroke-width="1.3"/><circle cx="525.9" cy="1038.8" r="2.1" fill="#1a5bfb"/><circle cx="609" cy="1034.8" r="7" fill="#4f82fb" fill-opacity=".26" stroke="#4179fb" stroke-width="1.3"/><circle cx="609" cy="1034.8" r="2.1" fill="#1a5bfb"/><circle cx="307.7" cy="1081.9" r="7.3" fill="#4f82fb" fill-opacity=".26" stroke="#4179fb" stroke-width="1.3"/><circle cx="307.7" cy="1081.9" r="2.1" fill="#1a5bfb"/><circle cx="662.8" cy="1127" r="6" fill="#4f82fb" fill-opacity=".26" stroke="#4179fb" stroke-width="1.3"/><circle cx="662.8" cy="1127" r="2.1" fill="#1a5bfb"/></svg>
<svg class="a" style="left:0;top:0" width="1859" height="1125"><circle cx="734" cy="1013" r="9.5" fill="#4f82fb" fill-opacity=".26" stroke="#4179fb" stroke-width="1.3"/><circle cx="734" cy="1013" r="2.1" fill="#1a5bfb"/><circle cx="741" cy="1128" r="12" fill="#4f82fb" fill-opacity=".26" stroke="#4179fb" stroke-width="1.3"/><circle cx="741" cy="1128" r="2.1" fill="#1a5bfb"/></svg>
<svg class="a" style="left:0;top:0" width="1859" height="1125"><path d="M1062.60,968.20 A113.4,113.4 0 0 1 1163.64,1133.08 L1139.94,1121.01 A86.8,86.8 0 0 0 1062.60,994.80Z" fill="#25bf3e" stroke="#fff" stroke-width="1.2"/><path d="M1163.64,1133.08 A113.4,113.4 0 0 1 1119.30,1179.81 L1106.00,1156.77 A86.8,86.8 0 0 0 1139.94,1121.01Z" fill="#c6d62f" stroke="#fff" stroke-width="1.2"/><path d="M1119.30,1179.81 A113.4,113.4 0 0 1 1062.60,1195.00 L1062.60,1168.40 A86.8,86.8 0 0 0 1106.00,1156.77Z" fill="#ffee00" stroke="#fff" stroke-width="1.2"/><path d="M1062.60,1195.00 A113.4,113.4 0 0 1 997.56,1174.49 L1012.81,1152.70 A86.8,86.8 0 0 0 1062.60,1168.40Z" fill="#ffcc00" stroke="#fff" stroke-width="1.2"/><path d="M997.56,1174.49 A113.4,113.4 0 0 1 958.61,1126.82 L983.00,1116.21 A86.8,86.8 0 0 0 1012.81,1152.70Z" fill="#ffa000" stroke="#fff" stroke-width="1.2"/><path d="M958.61,1126.82 A113.4,113.4 0 0 1 1062.60,968.20 L1062.60,994.80 A86.8,86.8 0 0 0 983.00,1116.21Z" fill="#ff6505" stroke="#fff" stroke-width="1.2"/><path d="M1597.00,922.90 A156.4,156.4 0 0 1 1738.86,1013.45 L1704.85,1029.24 A118.9,118.9 0 0 0 1597.00,960.40Z" fill="#1b60ff" stroke="#fff" stroke-width="1.2"/><path d="M1738.86,1013.45 A156.4,156.4 0 0 1 1597.00,1235.70 L1597.00,1198.20 A118.9,118.9 0 0 0 1704.85,1029.24Z" fill="#ff8c00" stroke="#fff" stroke-width="1.2"/><path d="M1597.00,1235.70 A156.4,156.4 0 0 1 1441.77,1098.36 L1478.99,1093.79 A118.9,118.9 0 0 0 1597.00,1198.20Z" fill="#8c3cff" stroke="#fff" stroke-width="1.2"/><path d="M1441.77,1098.36 A156.4,156.4 0 0 1 1597.00,922.90 L1597.00,960.40 A118.9,118.9 0 0 0 1478.99,1093.79Z" fill="#1fdb4c" stroke="#fff" stroke-width="1.2"/></svg>
<div class="dot" style="left:1186.3px;top:1022.2px;width:14.6px;height:14.6px;background:#25bf3e"></div>
<div class="dot" style="left:1186.3px;top:1043.2px;width:14.6px;height:14.6px;background:#c6d62f"></div>
<div class="dot" style="left:1186.3px;top:1064.2px;width:14.6px;height:14.6px;background:#ffee00"></div>
<div class="dot" style="left:1186.3px;top:1085.2px;width:14.6px;height:14.6px;background:#ffcc00"></div>
<div class="dot" style="left:1186.3px;top:1106.2px;width:14.6px;height:14.6px;background:#ff9800"></div>
<div class="dot" style="left:1763.4px;top:1040.2px;width:14.6px;height:14.6px;background:#1b60ff"></div>
<div class="dot" style="left:1763.4px;top:1061.27px;width:14.6px;height:14.6px;background:#ff8c00"></div>
<div class="dot" style="left:1763.4px;top:1082.3400000000001px;width:14.6px;height:14.6px;background:#8c3cff"></div>
<div class="dot" style="left:1763.4px;top:1103.41px;width:14.6px;height:14.6px;background:#1fdb4c"></div>
<div class="a" id="title" style="left:438.00px;top:82.73px;font-size:85.61px;line-height:85.61px;font-weight:400;letter-spacing:-1.464px;color:#5135e9;-webkit-text-stroke:2.4px #fff;">Account dashboard- stats view</div>
<div class="a" id="logo" style="left:183.20px;top:271.77px;font-size:27.91px;line-height:27.91px;font-weight:700;letter-spacing:0.000px;color:#ffffff;transform:scaleX(0.8092);transform-origin:0 0;">LoanPro</div>
<div class="a" id="logosub" style="left:158.60px;top:299.23px;font-size:11.19px;line-height:11.19px;font-weight:400;letter-spacing:0.143px;color:#ffffff;">Modern Credit Platform</div>
<div class="a" id="acme" style="left:306.60px;top:280.92px;font-size:18.17px;line-height:18.17px;font-weight:700;letter-spacing:-0.100px;color:#ffffff;">Acme Lending Co.</div>
<div class="a" id="n1" style="left:883.80px;top:284.68px;font-size:13.37px;line-height:13.37px;font-weight:700;letter-spacing:-0.071px;color:#ffffff;">Programs</div>
<div class="a" id="n2" style="left:975.00px;top:284.68px;font-size:13.37px;line-height:13.37px;font-weight:700;letter-spacing:0.056px;color:#ffffff;">Dashboards</div>
<div class="a" id="n3" style="left:1082.00px;top:284.68px;font-size:13.37px;line-height:13.37px;font-weight:700;letter-spacing:-0.250px;color:#ffffff;">Loans</div>
<div class="a" id="n4" style="left:1150.00px;top:284.68px;font-size:13.37px;line-height:13.37px;font-weight:700;letter-spacing:-0.357px;color:#ffffff;">Lines Of Credit</div>
<div class="a" id="n5" style="left:1271.20px;top:284.68px;font-size:13.37px;line-height:13.37px;font-weight:700;letter-spacing:-0.375px;color:#ffffff;">Tools</div>
<div class="a" id="n6" style="left:1344.80px;top:284.68px;font-size:13.37px;line-height:13.37px;font-weight:700;letter-spacing:-0.250px;color:#ffffff;">Reports</div>
<div class="a" id="n7" style="left:1434.20px;top:284.68px;font-size:13.37px;line-height:13.37px;font-weight:700;letter-spacing:-0.071px;color:#ffffff;">Settings</div>
<div class="a" id="n8" style="left:1528.00px;top:284.68px;font-size:13.37px;line-height:13.37px;font-weight:700;letter-spacing:-0.625px;color:#ffffff;">Users</div>
<div class="a" id="n9" style="left:1602.80px;top:284.68px;font-size:13.37px;line-height:13.37px;font-weight:700;letter-spacing:0.100px;color:#ffffff;">Invest</div>
<div class="a" id="jon" style="left:1836.80px;top:284.38px;font-size:13.37px;line-height:13.37px;font-weight:700;letter-spacing:0.000px;color:#ffffff;">Jon</div>
<div class="a" id="am" style="left:165.60px;top:337.08px;font-size:24.71px;line-height:24.71px;font-weight:400;letter-spacing:0.857px;color:#15151f;-webkit-text-stroke:0.45px #15151f;">Account Manager</div>
<div class="a" id="ne" style="left:1842.60px;top:343.33px;font-size:13.08px;line-height:13.08px;font-weight:700;letter-spacing:0.000px;color:#ffffff;">Ne</div>
<div class="a" id="t1" style="left:195.60px;top:396.89px;font-size:12.06px;line-height:12.06px;font-weight:400;letter-spacing:0.125px;color:#2f2f3b;-webkit-text-stroke:0.4px #2f2f3b;">All Loans</div>
<div class="a" id="t2" style="left:321.00px;top:396.89px;font-size:12.06px;line-height:12.06px;font-weight:400;letter-spacing:0.091px;color:#2f2f3b;-webkit-text-stroke:0.4px #2f2f3b;">All Past Due</div>
<div class="a" id="t3" style="left:426.20px;top:396.89px;font-size:12.06px;line-height:12.06px;font-weight:400;letter-spacing:0.286px;color:#2f2f3b;-webkit-text-stroke:0.4px #2f2f3b;">Due Soon</div>
<div class="a" id="t4" style="left:520.00px;top:396.89px;font-size:12.06px;line-height:12.06px;font-weight:400;letter-spacing:0.471px;color:#2f2f3b;-webkit-text-stroke:0.4px #2f2f3b;">Application Review</div>
<div class="a" id="t5" style="left:667.80px;top:396.89px;font-size:12.06px;line-height:12.06px;font-weight:400;letter-spacing:0.405px;color:#2f2f3b;-webkit-text-stroke:0.4px #2f2f3b;">Qualifies for Hardship</div>
<div class="a" id="t6" style="left:831.40px;top:396.89px;font-size:12.06px;line-height:12.06px;font-weight:400;letter-spacing:0.273px;color:#2f2f3b;-webkit-text-stroke:0.4px #2f2f3b;">All Searches</div>
<div class="a" id="t7" style="left:939.00px;top:396.89px;font-size:12.06px;line-height:12.06px;font-weight:400;letter-spacing:0.500px;color:#2f2f3b;-webkit-text-stroke:0.4px #2f2f3b;">New Search</div>
<div class="a" id="chip" style="left:213.00px;top:469.82px;font-size:12.50px;line-height:12.50px;font-weight:700;letter-spacing:-0.389px;color:#ffffff;">Archived Status: No</div>
<div class="a" id="filt" style="left:365.40px;top:470.19px;font-size:12.06px;line-height:12.06px;font-weight:400;letter-spacing:0.312px;color:#a9abb3;">Filter by Keyword</div>
<div class="a" id="reset" style="left:1792.80px;top:471.13px;font-size:11.19px;line-height:11.19px;font-weight:400;letter-spacing:0.654px;color:#1f1f2b;-webkit-text-stroke:0.4px #1f1f2b;">Reset Defaults</div>
<div class="a" id="s1a" style="left:257.20px;top:659.89px;font-size:24.49px;line-height:24.49px;font-weight:400;letter-spacing:-0.885px;color:#16161f;-webkit-text-stroke:0.45px #fff;">$39,585,879.31</div>
<div class="a" id="s1b" style="left:284.40px;top:685.83px;font-size:13.08px;line-height:13.08px;font-weight:700;letter-spacing:-0.406px;color:#16161f;">Principal Balance</div>
<div class="a" id="s1c" style="left:282.20px;top:715.49px;font-size:24.49px;line-height:24.49px;font-weight:400;letter-spacing:-1.556px;color:#16161f;-webkit-text-stroke:0.45px #fff;">$38,771.67</div>
<div class="a" id="s1d" style="left:311.20px;top:741.23px;font-size:13.08px;line-height:13.08px;font-weight:700;letter-spacing:-0.250px;color:#16161f;">Average</div>
<div class="a" id="s2a" style="left:651.40px;top:674.42px;font-size:38.37px;line-height:38.37px;font-weight:400;letter-spacing:0.000px;color:#16161f;transform:scaleX(0.8572);transform-origin:0 0;-webkit-text-stroke:0.6px #fff;">1,054</div>
<div class="a" id="s2b" style="left:666.40px;top:713.13px;font-size:13.08px;line-height:13.08px;font-weight:700;letter-spacing:-0.571px;color:#16161f;">Accounts</div>
<div class="a" id="s3a" style="left:974.60px;top:675.29px;font-size:24.49px;line-height:24.49px;font-weight:400;letter-spacing:-1.231px;color:#16161f;-webkit-text-stroke:0.45px #fff;">$39,728,124.79</div>
<div class="a" id="s3b" style="left:1031.40px;top:701.13px;font-size:13.08px;line-height:13.08px;font-weight:700;letter-spacing:-0.500px;color:#16161f;">PayOff</div>
<div class="a" id="s3c" style="left:994.20px;top:730.69px;font-size:24.49px;line-height:24.49px;font-weight:400;letter-spacing:-0.889px;color:#16161f;-webkit-text-stroke:0.45px #fff;">$38,910.99</div>
<div class="a" id="s3d" style="left:1027.20px;top:756.93px;font-size:13.08px;line-height:13.08px;font-weight:700;letter-spacing:-0.250px;color:#16161f;">Average</div>
<div class="a" id="s4a" style="left:1337.20px;top:675.29px;font-size:24.49px;line-height:24.49px;font-weight:400;letter-spacing:-1.042px;color:#16161f;-webkit-text-stroke:0.45px #fff;">$2,178,680.30</div>
<div class="a" id="s4b" style="left:1372.40px;top:701.13px;font-size:13.08px;line-height:13.08px;font-weight:700;letter-spacing:-0.444px;color:#16161f;">Amount Due</div>
<div class="a" id="s4c" style="left:1361.00px;top:730.69px;font-size:24.49px;line-height:24.49px;font-weight:400;letter-spacing:-1.438px;color:#16161f;-webkit-text-stroke:0.45px #fff;">$2,133.87</div>
<div class="a" id="s4d" style="left:1385.00px;top:756.93px;font-size:13.08px;line-height:13.08px;font-weight:700;letter-spacing:-0.417px;color:#16161f;">Average</div>
<div class="a" id="s5a" style="left:1749.40px;top:674.96px;font-size:37.50px;line-height:37.50px;font-weight:400;letter-spacing:0.000px;color:#16161f;transform:scaleX(0.7842);transform-origin:0 0;-webkit-text-stroke:0.6px #fff;">13</div>
<div class="a" id="s5b" style="left:1700.00px;top:713.33px;font-size:13.08px;line-height:13.08px;font-weight:700;letter-spacing:-0.525px;color:#16161f;">Average Days Past Due</div>
<div class="a" id="p1" style="left:187.60px;top:848.51px;font-size:11.92px;line-height:11.92px;font-weight:700;letter-spacing:-0.607px;color:#16161f;">LOANS LOCATIONS</div>
<div class="a" id="p2" style="left:899.20px;top:849.11px;font-size:11.92px;line-height:11.92px;font-weight:700;letter-spacing:-0.545px;color:#16161f;">DAYS PAST DUE BREAKDOWN</div>
<div class="a" id="p3" style="left:1437.60px;top:849.11px;font-size:11.92px;line-height:11.92px;font-weight:700;letter-spacing:-0.500px;color:#16161f;">LOAN COUNT BY PAYOFF AMOUNT RANGE</div>
<div class="a" id="l1" style="left:1205.40px;top:1022.39px;font-size:12.06px;line-height:12.06px;font-weight:400;letter-spacing:-0.292px;color:#646464;">Current Loans</div>
<div class="a" id="l2" style="left:1205.40px;top:1043.39px;font-size:12.06px;line-height:12.06px;font-weight:400;letter-spacing:-0.316px;color:#646464;">1 - 14 Days Past Due</div>
<div class="a" id="l3" style="left:1205.40px;top:1064.39px;font-size:12.06px;line-height:12.06px;font-weight:400;letter-spacing:-0.300px;color:#646464;">15 - 29 Days Past Due</div>
<div class="a" id="l4" style="left:1205.40px;top:1085.39px;font-size:12.06px;line-height:12.06px;font-weight:400;letter-spacing:-0.300px;color:#646464;">30 - 59 Days Past Due</div>
<div class="a" id="l5" style="left:1205.40px;top:1106.39px;font-size:12.06px;line-height:12.06px;font-weight:400;letter-spacing:-0.300px;color:#646464;">60 - 89 Days Past Due</div>
<div class="a" id="m4" style="left:1782.40px;top:1103.26px;font-size:12.21px;line-height:12.21px;font-weight:400;letter-spacing:-0.400px;color:#646464;">$10,000.01+</div>
<div class="a" id="m1" style="left:1782.40px;top:1040.16px;font-size:12.21px;line-height:12.21px;font-weight:400;letter-spacing:-0.400px;color:#646464;">$0.10 - $2,500.00</div>
<div class="a" id="m2" style="left:1782.40px;top:1061.26px;font-size:12.21px;line-height:12.21px;font-weight:400;letter-spacing:-0.400px;color:#646464;">$2,500.01 - $5,000.00</div>
<div class="a" id="m3" style="left:1782.40px;top:1082.36px;font-size:12.21px;line-height:12.21px;font-weight:400;letter-spacing:-0.400px;color:#646464;">$5,000.01 - $10,000.00</div>
</div>
</body></html>
